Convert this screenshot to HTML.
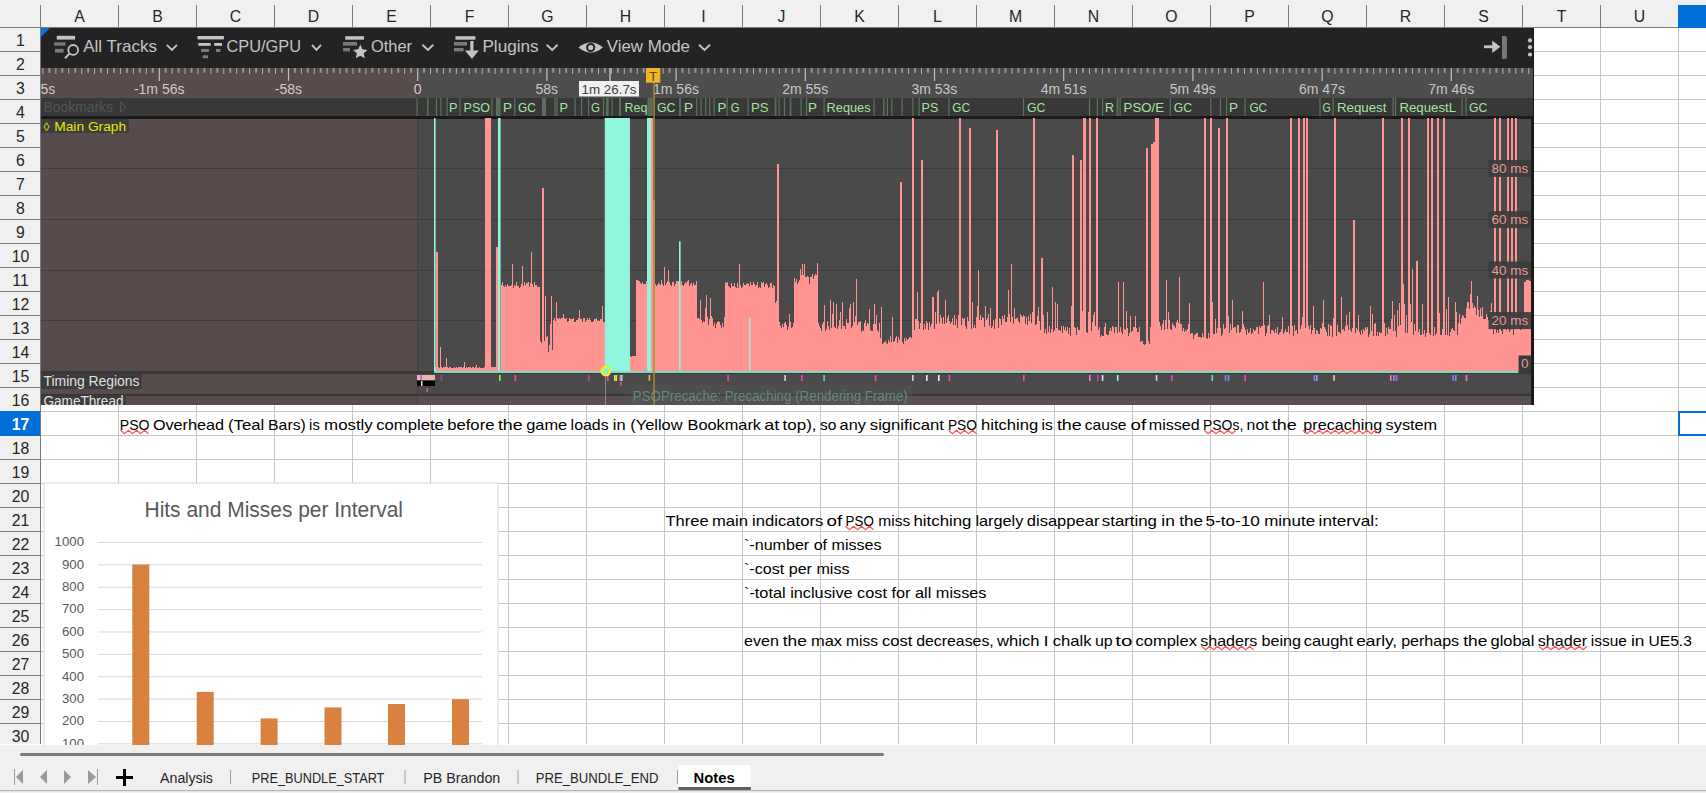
<!DOCTYPE html>
<html><head><meta charset="utf-8"><style>
html,body{margin:0;padding:0;width:1706px;height:793px;overflow:hidden;background:#fff}
svg{display:block;font-family:"Liberation Sans", sans-serif}
</style></head><body>
<svg width="1706" height="793" viewBox="0 0 1706 793" font-family='"Liberation Sans", sans-serif'>
<rect x="0.00" y="0.00" width="1706.00" height="793.00" fill="#ffffff"/>
<rect x="118.00" y="27.00" width="1.00" height="717.00" fill="#c6c6c6"/>
<rect x="196.00" y="27.00" width="1.00" height="717.00" fill="#c6c6c6"/>
<rect x="274.00" y="27.00" width="1.00" height="717.00" fill="#c6c6c6"/>
<rect x="352.00" y="27.00" width="1.00" height="717.00" fill="#c6c6c6"/>
<rect x="430.00" y="27.00" width="1.00" height="717.00" fill="#c6c6c6"/>
<rect x="508.00" y="27.00" width="1.00" height="717.00" fill="#c6c6c6"/>
<rect x="586.00" y="27.00" width="1.00" height="717.00" fill="#c6c6c6"/>
<rect x="664.00" y="27.00" width="1.00" height="717.00" fill="#c6c6c6"/>
<rect x="742.00" y="27.00" width="1.00" height="717.00" fill="#c6c6c6"/>
<rect x="820.00" y="27.00" width="1.00" height="717.00" fill="#c6c6c6"/>
<rect x="898.00" y="27.00" width="1.00" height="717.00" fill="#c6c6c6"/>
<rect x="976.00" y="27.00" width="1.00" height="717.00" fill="#c6c6c6"/>
<rect x="1054.00" y="27.00" width="1.00" height="717.00" fill="#c6c6c6"/>
<rect x="1132.00" y="27.00" width="1.00" height="717.00" fill="#c6c6c6"/>
<rect x="1210.00" y="27.00" width="1.00" height="717.00" fill="#c6c6c6"/>
<rect x="1288.00" y="27.00" width="1.00" height="717.00" fill="#c6c6c6"/>
<rect x="1366.00" y="27.00" width="1.00" height="717.00" fill="#c6c6c6"/>
<rect x="1444.00" y="27.00" width="1.00" height="717.00" fill="#c6c6c6"/>
<rect x="1522.00" y="27.00" width="1.00" height="717.00" fill="#c6c6c6"/>
<rect x="1600.00" y="27.00" width="1.00" height="717.00" fill="#c6c6c6"/>
<rect x="1678.00" y="27.00" width="1.00" height="717.00" fill="#c6c6c6"/>
<rect x="1756.00" y="27.00" width="1.00" height="717.00" fill="#c6c6c6"/>
<rect x="40.00" y="51.00" width="1666.00" height="1.00" fill="#c6c6c6"/>
<rect x="40.00" y="75.00" width="1666.00" height="1.00" fill="#c6c6c6"/>
<rect x="40.00" y="99.00" width="1666.00" height="1.00" fill="#c6c6c6"/>
<rect x="40.00" y="123.00" width="1666.00" height="1.00" fill="#c6c6c6"/>
<rect x="40.00" y="147.00" width="1666.00" height="1.00" fill="#c6c6c6"/>
<rect x="40.00" y="171.00" width="1666.00" height="1.00" fill="#c6c6c6"/>
<rect x="40.00" y="195.00" width="1666.00" height="1.00" fill="#c6c6c6"/>
<rect x="40.00" y="219.00" width="1666.00" height="1.00" fill="#c6c6c6"/>
<rect x="40.00" y="243.00" width="1666.00" height="1.00" fill="#c6c6c6"/>
<rect x="40.00" y="267.00" width="1666.00" height="1.00" fill="#c6c6c6"/>
<rect x="40.00" y="291.00" width="1666.00" height="1.00" fill="#c6c6c6"/>
<rect x="40.00" y="315.00" width="1666.00" height="1.00" fill="#c6c6c6"/>
<rect x="40.00" y="339.00" width="1666.00" height="1.00" fill="#c6c6c6"/>
<rect x="40.00" y="363.00" width="1666.00" height="1.00" fill="#c6c6c6"/>
<rect x="40.00" y="387.00" width="1666.00" height="1.00" fill="#c6c6c6"/>
<rect x="40.00" y="411.00" width="1666.00" height="1.00" fill="#c6c6c6"/>
<rect x="40.00" y="435.00" width="1666.00" height="1.00" fill="#c6c6c6"/>
<rect x="40.00" y="459.00" width="1666.00" height="1.00" fill="#c6c6c6"/>
<rect x="40.00" y="483.00" width="1666.00" height="1.00" fill="#c6c6c6"/>
<rect x="40.00" y="507.00" width="1666.00" height="1.00" fill="#c6c6c6"/>
<rect x="40.00" y="531.00" width="1666.00" height="1.00" fill="#c6c6c6"/>
<rect x="40.00" y="555.00" width="1666.00" height="1.00" fill="#c6c6c6"/>
<rect x="40.00" y="579.00" width="1666.00" height="1.00" fill="#c6c6c6"/>
<rect x="40.00" y="603.00" width="1666.00" height="1.00" fill="#c6c6c6"/>
<rect x="40.00" y="627.00" width="1666.00" height="1.00" fill="#c6c6c6"/>
<rect x="40.00" y="651.00" width="1666.00" height="1.00" fill="#c6c6c6"/>
<rect x="40.00" y="675.00" width="1666.00" height="1.00" fill="#c6c6c6"/>
<rect x="40.00" y="699.00" width="1666.00" height="1.00" fill="#c6c6c6"/>
<rect x="40.00" y="723.00" width="1666.00" height="1.00" fill="#c6c6c6"/>
<rect x="0.00" y="0.00" width="1706.00" height="27.00" fill="#f0f0f0"/>
<rect x="0.00" y="27.00" width="1706.00" height="1.00" fill="#7a7a7a"/>
<rect x="40.00" y="5.00" width="1.00" height="22.00" fill="#7a7a7a"/>
<rect x="118.00" y="5.00" width="1.00" height="22.00" fill="#7a7a7a"/>
<rect x="196.00" y="5.00" width="1.00" height="22.00" fill="#7a7a7a"/>
<rect x="274.00" y="5.00" width="1.00" height="22.00" fill="#7a7a7a"/>
<rect x="352.00" y="5.00" width="1.00" height="22.00" fill="#7a7a7a"/>
<rect x="430.00" y="5.00" width="1.00" height="22.00" fill="#7a7a7a"/>
<rect x="508.00" y="5.00" width="1.00" height="22.00" fill="#7a7a7a"/>
<rect x="586.00" y="5.00" width="1.00" height="22.00" fill="#7a7a7a"/>
<rect x="664.00" y="5.00" width="1.00" height="22.00" fill="#7a7a7a"/>
<rect x="742.00" y="5.00" width="1.00" height="22.00" fill="#7a7a7a"/>
<rect x="820.00" y="5.00" width="1.00" height="22.00" fill="#7a7a7a"/>
<rect x="898.00" y="5.00" width="1.00" height="22.00" fill="#7a7a7a"/>
<rect x="976.00" y="5.00" width="1.00" height="22.00" fill="#7a7a7a"/>
<rect x="1054.00" y="5.00" width="1.00" height="22.00" fill="#7a7a7a"/>
<rect x="1132.00" y="5.00" width="1.00" height="22.00" fill="#7a7a7a"/>
<rect x="1210.00" y="5.00" width="1.00" height="22.00" fill="#7a7a7a"/>
<rect x="1288.00" y="5.00" width="1.00" height="22.00" fill="#7a7a7a"/>
<rect x="1366.00" y="5.00" width="1.00" height="22.00" fill="#7a7a7a"/>
<rect x="1444.00" y="5.00" width="1.00" height="22.00" fill="#7a7a7a"/>
<rect x="1522.00" y="5.00" width="1.00" height="22.00" fill="#7a7a7a"/>
<rect x="1600.00" y="5.00" width="1.00" height="22.00" fill="#7a7a7a"/>
<rect x="1678.00" y="5.00" width="1.00" height="22.00" fill="#7a7a7a"/>
<text x="79.5" y="22.2" font-size="15.8" fill="#262626" text-anchor="middle">A</text>
<text x="157.5" y="22.2" font-size="15.8" fill="#262626" text-anchor="middle">B</text>
<text x="235.5" y="22.2" font-size="15.8" fill="#262626" text-anchor="middle">C</text>
<text x="313.5" y="22.2" font-size="15.8" fill="#262626" text-anchor="middle">D</text>
<text x="391.5" y="22.2" font-size="15.8" fill="#262626" text-anchor="middle">E</text>
<text x="469.5" y="22.2" font-size="15.8" fill="#262626" text-anchor="middle">F</text>
<text x="547.5" y="22.2" font-size="15.8" fill="#262626" text-anchor="middle">G</text>
<text x="625.5" y="22.2" font-size="15.8" fill="#262626" text-anchor="middle">H</text>
<text x="703.5" y="22.2" font-size="15.8" fill="#262626" text-anchor="middle">I</text>
<text x="781.5" y="22.2" font-size="15.8" fill="#262626" text-anchor="middle">J</text>
<text x="859.5" y="22.2" font-size="15.8" fill="#262626" text-anchor="middle">K</text>
<text x="937.5" y="22.2" font-size="15.8" fill="#262626" text-anchor="middle">L</text>
<text x="1015.5" y="22.2" font-size="15.8" fill="#262626" text-anchor="middle">M</text>
<text x="1093.5" y="22.2" font-size="15.8" fill="#262626" text-anchor="middle">N</text>
<text x="1171.5" y="22.2" font-size="15.8" fill="#262626" text-anchor="middle">O</text>
<text x="1249.5" y="22.2" font-size="15.8" fill="#262626" text-anchor="middle">P</text>
<text x="1327.5" y="22.2" font-size="15.8" fill="#262626" text-anchor="middle">Q</text>
<text x="1405.5" y="22.2" font-size="15.8" fill="#262626" text-anchor="middle">R</text>
<text x="1483.5" y="22.2" font-size="15.8" fill="#262626" text-anchor="middle">S</text>
<text x="1561.5" y="22.2" font-size="15.8" fill="#262626" text-anchor="middle">T</text>
<text x="1639.5" y="22.2" font-size="15.8" fill="#262626" text-anchor="middle">U</text>
<rect x="1678.00" y="5.00" width="28.00" height="23.00" fill="#0070d8"/>
<rect x="0.00" y="28.00" width="40.00" height="716.00" fill="#f0f0f0"/>
<rect x="40.00" y="5.00" width="1.00" height="739.00" fill="#7a7a7a"/>
<rect x="0.00" y="51.00" width="40.00" height="1.00" fill="#7a7a7a"/>
<rect x="0.00" y="75.00" width="40.00" height="1.00" fill="#7a7a7a"/>
<rect x="0.00" y="99.00" width="40.00" height="1.00" fill="#7a7a7a"/>
<rect x="0.00" y="123.00" width="40.00" height="1.00" fill="#7a7a7a"/>
<rect x="0.00" y="147.00" width="40.00" height="1.00" fill="#7a7a7a"/>
<rect x="0.00" y="171.00" width="40.00" height="1.00" fill="#7a7a7a"/>
<rect x="0.00" y="195.00" width="40.00" height="1.00" fill="#7a7a7a"/>
<rect x="0.00" y="219.00" width="40.00" height="1.00" fill="#7a7a7a"/>
<rect x="0.00" y="243.00" width="40.00" height="1.00" fill="#7a7a7a"/>
<rect x="0.00" y="267.00" width="40.00" height="1.00" fill="#7a7a7a"/>
<rect x="0.00" y="291.00" width="40.00" height="1.00" fill="#7a7a7a"/>
<rect x="0.00" y="315.00" width="40.00" height="1.00" fill="#7a7a7a"/>
<rect x="0.00" y="339.00" width="40.00" height="1.00" fill="#7a7a7a"/>
<rect x="0.00" y="363.00" width="40.00" height="1.00" fill="#7a7a7a"/>
<rect x="0.00" y="387.00" width="40.00" height="1.00" fill="#7a7a7a"/>
<rect x="0.00" y="411.00" width="40.00" height="1.00" fill="#7a7a7a"/>
<rect x="0.00" y="435.00" width="40.00" height="1.00" fill="#7a7a7a"/>
<rect x="0.00" y="459.00" width="40.00" height="1.00" fill="#7a7a7a"/>
<rect x="0.00" y="483.00" width="40.00" height="1.00" fill="#7a7a7a"/>
<rect x="0.00" y="507.00" width="40.00" height="1.00" fill="#7a7a7a"/>
<rect x="0.00" y="531.00" width="40.00" height="1.00" fill="#7a7a7a"/>
<rect x="0.00" y="555.00" width="40.00" height="1.00" fill="#7a7a7a"/>
<rect x="0.00" y="579.00" width="40.00" height="1.00" fill="#7a7a7a"/>
<rect x="0.00" y="603.00" width="40.00" height="1.00" fill="#7a7a7a"/>
<rect x="0.00" y="627.00" width="40.00" height="1.00" fill="#7a7a7a"/>
<rect x="0.00" y="651.00" width="40.00" height="1.00" fill="#7a7a7a"/>
<rect x="0.00" y="675.00" width="40.00" height="1.00" fill="#7a7a7a"/>
<rect x="0.00" y="699.00" width="40.00" height="1.00" fill="#7a7a7a"/>
<rect x="0.00" y="723.00" width="40.00" height="1.00" fill="#7a7a7a"/>
<rect x="0.00" y="411.00" width="40.00" height="25.00" fill="#0070d8"/>
<text x="20.5" y="46.2" font-size="15.8" fill="#262626" text-anchor="middle">1</text>
<text x="20.5" y="70.2" font-size="15.8" fill="#262626" text-anchor="middle">2</text>
<text x="20.5" y="94.2" font-size="15.8" fill="#262626" text-anchor="middle">3</text>
<text x="20.5" y="118.2" font-size="15.8" fill="#262626" text-anchor="middle">4</text>
<text x="20.5" y="142.2" font-size="15.8" fill="#262626" text-anchor="middle">5</text>
<text x="20.5" y="166.2" font-size="15.8" fill="#262626" text-anchor="middle">6</text>
<text x="20.5" y="190.2" font-size="15.8" fill="#262626" text-anchor="middle">7</text>
<text x="20.5" y="214.2" font-size="15.8" fill="#262626" text-anchor="middle">8</text>
<text x="20.5" y="238.2" font-size="15.8" fill="#262626" text-anchor="middle">9</text>
<text x="20.5" y="262.2" font-size="15.8" fill="#262626" text-anchor="middle">10</text>
<text x="20.5" y="286.2" font-size="15.8" fill="#262626" text-anchor="middle">11</text>
<text x="20.5" y="310.2" font-size="15.8" fill="#262626" text-anchor="middle">12</text>
<text x="20.5" y="334.2" font-size="15.8" fill="#262626" text-anchor="middle">13</text>
<text x="20.5" y="358.2" font-size="15.8" fill="#262626" text-anchor="middle">14</text>
<text x="20.5" y="382.2" font-size="15.8" fill="#262626" text-anchor="middle">15</text>
<text x="20.5" y="406.2" font-size="15.8" fill="#262626" text-anchor="middle">16</text>
<text x="20.5" y="430.2" font-size="15.8" fill="#ffffff" text-anchor="middle" font-weight="bold">17</text>
<text x="20.5" y="454.2" font-size="15.8" fill="#262626" text-anchor="middle">18</text>
<text x="20.5" y="478.2" font-size="15.8" fill="#262626" text-anchor="middle">19</text>
<text x="20.5" y="502.2" font-size="15.8" fill="#262626" text-anchor="middle">20</text>
<text x="20.5" y="526.2" font-size="15.8" fill="#262626" text-anchor="middle">21</text>
<text x="20.5" y="550.2" font-size="15.8" fill="#262626" text-anchor="middle">22</text>
<text x="20.5" y="574.2" font-size="15.8" fill="#262626" text-anchor="middle">23</text>
<text x="20.5" y="598.2" font-size="15.8" fill="#262626" text-anchor="middle">24</text>
<text x="20.5" y="622.2" font-size="15.8" fill="#262626" text-anchor="middle">25</text>
<text x="20.5" y="646.2" font-size="15.8" fill="#262626" text-anchor="middle">26</text>
<text x="20.5" y="670.2" font-size="15.8" fill="#262626" text-anchor="middle">27</text>
<text x="20.5" y="694.2" font-size="15.8" fill="#262626" text-anchor="middle">28</text>
<text x="20.5" y="718.2" font-size="15.8" fill="#262626" text-anchor="middle">29</text>
<text x="20.5" y="742.2" font-size="15.8" fill="#262626" text-anchor="middle">30</text>
<rect x="1679" y="412" width="40" height="23" fill="none" stroke="#0070d8" stroke-width="2"/>
<text x="119.8" y="429.5" font-size="14.5" fill="#000000" textLength="29.8" lengthAdjust="spacingAndGlyphs">PSO</text>
<text x="152.9" y="429.5" font-size="14.5" fill="#000000" textLength="71.2" lengthAdjust="spacingAndGlyphs">Overhead</text>
<text x="228.0" y="429.5" font-size="14.5" fill="#000000" textLength="36.2" lengthAdjust="spacingAndGlyphs">(Teal</text>
<text x="268.1" y="429.5" font-size="14.5" fill="#000000" textLength="37.7" lengthAdjust="spacingAndGlyphs">Bars)</text>
<text x="309.1" y="429.5" font-size="14.5" fill="#000000" textLength="10.7" lengthAdjust="spacingAndGlyphs">is</text>
<text x="324.1" y="429.5" font-size="14.5" fill="#000000" textLength="48.7" lengthAdjust="spacingAndGlyphs">mostly</text>
<text x="376.2" y="429.5" font-size="14.5" fill="#000000" textLength="67.7" lengthAdjust="spacingAndGlyphs">complete</text>
<text x="447.2" y="429.5" font-size="14.5" fill="#000000" textLength="47.3" lengthAdjust="spacingAndGlyphs">before</text>
<text x="497.9" y="429.5" font-size="14.5" fill="#000000" textLength="24.8" lengthAdjust="spacingAndGlyphs">the</text>
<text x="526.2" y="429.5" font-size="14.5" fill="#000000" textLength="41.0" lengthAdjust="spacingAndGlyphs">game</text>
<text x="570.6" y="429.5" font-size="14.5" fill="#000000" textLength="38.1" lengthAdjust="spacingAndGlyphs">loads</text>
<text x="612.8" y="429.5" font-size="14.5" fill="#000000" textLength="12.8" lengthAdjust="spacingAndGlyphs">in</text>
<text x="630.3" y="429.5" font-size="14.5" fill="#000000" textLength="52.3" lengthAdjust="spacingAndGlyphs">(Yellow</text>
<text x="687.5" y="429.5" font-size="14.5" fill="#000000" textLength="73.5" lengthAdjust="spacingAndGlyphs">Bookmark</text>
<text x="764.3" y="429.5" font-size="14.5" fill="#000000" textLength="15.0" lengthAdjust="spacingAndGlyphs">at</text>
<text x="782.6" y="429.5" font-size="14.5" fill="#000000" textLength="34.0" lengthAdjust="spacingAndGlyphs">top),</text>
<text x="819.9" y="429.5" font-size="14.5" fill="#000000" textLength="16.4" lengthAdjust="spacingAndGlyphs">so</text>
<text x="839.6" y="429.5" font-size="14.5" fill="#000000" textLength="26.2" lengthAdjust="spacingAndGlyphs">any</text>
<text x="869.8" y="429.5" font-size="14.5" fill="#000000" textLength="74.1" lengthAdjust="spacingAndGlyphs">significant</text>
<text x="947.9" y="429.5" font-size="14.5" fill="#000000" textLength="29.0" lengthAdjust="spacingAndGlyphs">PSO</text>
<text x="981.0" y="429.5" font-size="14.5" fill="#000000" textLength="57.1" lengthAdjust="spacingAndGlyphs">hitching</text>
<text x="1041.5" y="429.5" font-size="14.5" fill="#000000" textLength="11.4" lengthAdjust="spacingAndGlyphs">is</text>
<text x="1056.9" y="429.5" font-size="14.5" fill="#000000" textLength="24.9" lengthAdjust="spacingAndGlyphs">the</text>
<text x="1084.8" y="429.5" font-size="14.5" fill="#000000" textLength="41.7" lengthAdjust="spacingAndGlyphs">cause</text>
<text x="1130.6" y="429.5" font-size="14.5" fill="#000000" textLength="15.6" lengthAdjust="spacingAndGlyphs">of</text>
<text x="1148.8" y="429.5" font-size="14.5" fill="#000000" textLength="50.9" lengthAdjust="spacingAndGlyphs">missed</text>
<text x="1203.0" y="429.5" font-size="14.5" fill="#000000" textLength="40.3" lengthAdjust="spacingAndGlyphs">PSOs,</text>
<text x="1246.6" y="429.5" font-size="14.5" fill="#000000" textLength="22.0" lengthAdjust="spacingAndGlyphs">not</text>
<text x="1271.9" y="429.5" font-size="14.5" fill="#000000" textLength="24.9" lengthAdjust="spacingAndGlyphs">the</text>
<text x="1303.3" y="429.5" font-size="14.5" fill="#000000" textLength="79.0" lengthAdjust="spacingAndGlyphs">precaching</text>
<text x="1385.6" y="429.5" font-size="14.5" fill="#000000" textLength="51.6" lengthAdjust="spacingAndGlyphs">system</text>
<text x="665.5" y="525.5" font-size="14.5" fill="#000000" textLength="43.1" lengthAdjust="spacingAndGlyphs">Three</text>
<text x="712.0" y="525.5" font-size="14.5" fill="#000000" textLength="36.0" lengthAdjust="spacingAndGlyphs">main</text>
<text x="752.1" y="525.5" font-size="14.5" fill="#000000" textLength="71.2" lengthAdjust="spacingAndGlyphs">indicators</text>
<text x="826.6" y="525.5" font-size="14.5" fill="#000000" textLength="15.7" lengthAdjust="spacingAndGlyphs">of</text>
<text x="845.6" y="525.5" font-size="14.5" fill="#000000" textLength="28.3" lengthAdjust="spacingAndGlyphs">PSO</text>
<text x="878.3" y="525.5" font-size="14.5" fill="#000000" textLength="31.9" lengthAdjust="spacingAndGlyphs">miss</text>
<text x="913.5" y="525.5" font-size="14.5" fill="#000000" textLength="57.9" lengthAdjust="spacingAndGlyphs">hitching</text>
<text x="975.4" y="525.5" font-size="14.5" fill="#000000" textLength="48.0" lengthAdjust="spacingAndGlyphs">largely</text>
<text x="1026.8" y="525.5" font-size="14.5" fill="#000000" textLength="72.6" lengthAdjust="spacingAndGlyphs">disappear</text>
<text x="1101.8" y="525.5" font-size="14.5" fill="#000000" textLength="55.2" lengthAdjust="spacingAndGlyphs">starting</text>
<text x="1161.3" y="525.5" font-size="14.5" fill="#000000" textLength="13.5" lengthAdjust="spacingAndGlyphs">in</text>
<text x="1179.2" y="525.5" font-size="14.5" fill="#000000" textLength="23.7" lengthAdjust="spacingAndGlyphs">the</text>
<text x="1205.5" y="525.5" font-size="14.5" fill="#000000" textLength="54.3" lengthAdjust="spacingAndGlyphs">5-to-10</text>
<text x="1264.2" y="525.5" font-size="14.5" fill="#000000" textLength="50.9" lengthAdjust="spacingAndGlyphs">minute</text>
<text x="1318.6" y="525.5" font-size="14.5" fill="#000000" textLength="60.2" lengthAdjust="spacingAndGlyphs">interval:</text>
<text x="744.1" y="645.5" font-size="14.5" fill="#000000" textLength="34.7" lengthAdjust="spacingAndGlyphs">even</text>
<text x="782.8" y="645.5" font-size="14.5" fill="#000000" textLength="24.1" lengthAdjust="spacingAndGlyphs">the</text>
<text x="811.0" y="645.5" font-size="14.5" fill="#000000" textLength="31.1" lengthAdjust="spacingAndGlyphs">max</text>
<text x="846.1" y="645.5" font-size="14.5" fill="#000000" textLength="31.9" lengthAdjust="spacingAndGlyphs">miss</text>
<text x="882.0" y="645.5" font-size="14.5" fill="#000000" textLength="30.4" lengthAdjust="spacingAndGlyphs">cost</text>
<text x="916.2" y="645.5" font-size="14.5" fill="#000000" textLength="77.6" lengthAdjust="spacingAndGlyphs">decreases,</text>
<text x="997.1" y="645.5" font-size="14.5" fill="#000000" textLength="42.4" lengthAdjust="spacingAndGlyphs">which</text>
<text x="1043.6" y="645.5" font-size="14.5" fill="#000000" textLength="5.1" lengthAdjust="spacingAndGlyphs">I</text>
<text x="1052.7" y="645.5" font-size="14.5" fill="#000000" textLength="38.9" lengthAdjust="spacingAndGlyphs">chalk</text>
<text x="1094.9" y="645.5" font-size="14.5" fill="#000000" textLength="17.8" lengthAdjust="spacingAndGlyphs">up</text>
<text x="1115.3" y="645.5" font-size="14.5" fill="#000000" textLength="17.1" lengthAdjust="spacingAndGlyphs">to</text>
<text x="1135.5" y="645.5" font-size="14.5" fill="#000000" textLength="61.4" lengthAdjust="spacingAndGlyphs">complex</text>
<text x="1200.2" y="645.5" font-size="14.5" fill="#000000" textLength="57.2" lengthAdjust="spacingAndGlyphs">shaders</text>
<text x="1261.4" y="645.5" font-size="14.5" fill="#000000" textLength="39.6" lengthAdjust="spacingAndGlyphs">being</text>
<text x="1303.7" y="645.5" font-size="14.5" fill="#000000" textLength="49.4" lengthAdjust="spacingAndGlyphs">caught</text>
<text x="1356.2" y="645.5" font-size="14.5" fill="#000000" textLength="41.0" lengthAdjust="spacingAndGlyphs">early,</text>
<text x="1401.2" y="645.5" font-size="14.5" fill="#000000" textLength="57.9" lengthAdjust="spacingAndGlyphs">perhaps</text>
<text x="1463.2" y="645.5" font-size="14.5" fill="#000000" textLength="24.1" lengthAdjust="spacingAndGlyphs">the</text>
<text x="1490.6" y="645.5" font-size="14.5" fill="#000000" textLength="43.8" lengthAdjust="spacingAndGlyphs">global</text>
<text x="1537.7" y="645.5" font-size="14.5" fill="#000000" textLength="49.4" lengthAdjust="spacingAndGlyphs">shader</text>
<text x="1590.8" y="645.5" font-size="14.5" fill="#000000" textLength="36.0" lengthAdjust="spacingAndGlyphs">issue</text>
<text x="1630.9" y="645.5" font-size="14.5" fill="#000000" textLength="13.5" lengthAdjust="spacingAndGlyphs">in</text>
<text x="1648.5" y="645.5" font-size="14.5" fill="#000000" textLength="43.4" lengthAdjust="spacingAndGlyphs">UE5.3</text>
<text x="744.0" y="549.5" font-size="14.5" fill="#000000" textLength="137.5" lengthAdjust="spacingAndGlyphs">`-number of misses</text>
<text x="744.0" y="573.5" font-size="14.5" fill="#000000" textLength="105.5" lengthAdjust="spacingAndGlyphs">`-cost per miss</text>
<text x="744.0" y="597.5" font-size="14.5" fill="#000000" textLength="242.5" lengthAdjust="spacingAndGlyphs">`-total inclusive cost for all misses</text>
<polyline points="120.5,430.3 124.5,433.7 128.5,430.3 132.5,433.7 136.5,430.3 140.5,433.7 144.5,430.3 148.5,433.7" fill="none" stroke="#ff5050" stroke-width="1.2"/>
<polyline points="948.5,430.3 952.5,433.7 956.5,430.3 960.5,433.7 964.5,430.3 968.5,433.7 972.5,430.3 976.5,433.7" fill="none" stroke="#ff5050" stroke-width="1.2"/>
<polyline points="1204.0,430.3 1208.0,433.7 1212.0,430.3 1216.0,433.7 1220.0,430.3 1224.0,433.7 1228.0,430.3 1232.0,433.7 1236.0,430.3" fill="none" stroke="#ff5050" stroke-width="1.2"/>
<polyline points="1303.0,430.3 1307.0,433.7 1311.0,430.3 1315.0,433.7 1319.0,430.3 1323.0,433.7 1327.0,430.3 1331.0,433.7 1335.0,430.3 1339.0,433.7 1343.0,430.3 1347.0,433.7 1351.0,430.3 1355.0,433.7 1359.0,430.3 1363.0,433.7 1367.0,430.3 1371.0,433.7 1375.0,430.3 1379.0,433.7" fill="none" stroke="#ff5050" stroke-width="1.2"/>
<polyline points="845.5,526.3 849.5,529.7 853.5,526.3 857.5,529.7 861.5,526.3 865.5,529.7 869.5,526.3 873.5,529.7" fill="none" stroke="#ff5050" stroke-width="1.2"/>
<polyline points="1201.6,646.3 1205.6,649.7 1209.6,646.3 1213.6,649.7 1217.6,646.3 1221.6,649.7 1225.6,646.3 1229.6,649.7 1233.6,646.3 1237.6,649.7 1241.6,646.3 1245.6,649.7 1249.6,646.3 1253.6,649.7" fill="none" stroke="#ff5050" stroke-width="1.2"/>
<polyline points="1539.0,646.3 1543.0,649.7 1547.0,646.3 1551.0,649.7 1555.0,646.3 1559.0,649.7 1563.0,646.3 1567.0,649.7 1571.0,646.3 1575.0,649.7 1579.0,646.3 1583.0,649.7 1587.0,646.3" fill="none" stroke="#ff5050" stroke-width="1.2"/>
<rect x="44.00" y="483.00" width="454.00" height="300.00" fill="#ffffff" stroke="#d9d9d9" stroke-width="1"/>
<text x="144.5" y="516.6" font-size="21.5" fill="#595959" textLength="258.5" lengthAdjust="spacingAndGlyphs">Hits and Misses per Interval</text>
<rect x="98.00" y="542.00" width="384.00" height="1.00" fill="#d9d9d9"/>
<text x="84.0" y="546.3" font-size="12.5" fill="#595959" text-anchor="end" textLength="29.4" lengthAdjust="spacingAndGlyphs">1000</text>
<rect x="98.00" y="564.37" width="384.00" height="1.00" fill="#d9d9d9"/>
<text x="84.0" y="568.7" font-size="12.5" fill="#595959" text-anchor="end" textLength="22.0" lengthAdjust="spacingAndGlyphs">900</text>
<rect x="98.00" y="586.74" width="384.00" height="1.00" fill="#d9d9d9"/>
<text x="84.0" y="591.0" font-size="12.5" fill="#595959" text-anchor="end" textLength="22.0" lengthAdjust="spacingAndGlyphs">800</text>
<rect x="98.00" y="609.11" width="384.00" height="1.00" fill="#d9d9d9"/>
<text x="84.0" y="613.4" font-size="12.5" fill="#595959" text-anchor="end" textLength="22.0" lengthAdjust="spacingAndGlyphs">700</text>
<rect x="98.00" y="631.48" width="384.00" height="1.00" fill="#d9d9d9"/>
<text x="84.0" y="635.8" font-size="12.5" fill="#595959" text-anchor="end" textLength="22.0" lengthAdjust="spacingAndGlyphs">600</text>
<rect x="98.00" y="653.85" width="384.00" height="1.00" fill="#d9d9d9"/>
<text x="84.0" y="658.1" font-size="12.5" fill="#595959" text-anchor="end" textLength="22.0" lengthAdjust="spacingAndGlyphs">500</text>
<rect x="98.00" y="676.22" width="384.00" height="1.00" fill="#d9d9d9"/>
<text x="84.0" y="680.5" font-size="12.5" fill="#595959" text-anchor="end" textLength="22.0" lengthAdjust="spacingAndGlyphs">400</text>
<rect x="98.00" y="698.59" width="384.00" height="1.00" fill="#d9d9d9"/>
<text x="84.0" y="702.9" font-size="12.5" fill="#595959" text-anchor="end" textLength="22.0" lengthAdjust="spacingAndGlyphs">300</text>
<rect x="98.00" y="720.96" width="384.00" height="1.00" fill="#d9d9d9"/>
<text x="84.0" y="725.3" font-size="12.5" fill="#595959" text-anchor="end" textLength="22.0" lengthAdjust="spacingAndGlyphs">200</text>
<rect x="98.00" y="743.33" width="384.00" height="1.00" fill="#d9d9d9"/>
<text x="84.0" y="747.6" font-size="12.5" fill="#595959" text-anchor="end" textLength="22.0" lengthAdjust="spacingAndGlyphs">100</text>
<rect x="132.30" y="564.50" width="17.00" height="235.50" fill="#d9813f"/>
<rect x="196.70" y="691.90" width="17.00" height="108.10" fill="#d9813f"/>
<rect x="260.60" y="718.40" width="17.00" height="81.60" fill="#d9813f"/>
<rect x="324.50" y="707.40" width="17.00" height="92.60" fill="#d9813f"/>
<rect x="388.00" y="704.00" width="17.00" height="96.00" fill="#d9813f"/>
<rect x="452.00" y="699.20" width="17.00" height="100.80" fill="#d9813f"/>
<rect x="0.00" y="745.00" width="1706.00" height="48.00" fill="#f0f0f0"/>
<rect x="20.00" y="753.00" width="864.00" height="3.00" fill="#7a7a7a" rx="1.5"/>
<rect x="0.00" y="790.00" width="1706.00" height="1.20" fill="#b4b4b4"/>
<rect x="14.00" y="769.00" width="1.00" height="16.00" fill="#9a9a9a"/>
<polygon points="16,777 23,770 23,784" fill="#9a9a9a"/>
<polygon points="40,777 47,770 47,784" fill="#9a9a9a"/>
<polygon points="64,770 71,777 64,784" fill="#9a9a9a"/>
<polygon points="88,770 96,777 88,784" fill="#9a9a9a"/>
<rect x="97.00" y="769.00" width="1.00" height="16.00" fill="#9a9a9a"/>
<rect x="116.00" y="776.00" width="17.00" height="3.00" fill="#000"/>
<rect x="123.00" y="769.00" width="3.00" height="17.00" fill="#000"/>
<text x="160.0" y="783.0" font-size="14" fill="#262626" textLength="53.0" lengthAdjust="spacingAndGlyphs">Analysis</text>
<rect x="230.00" y="770.00" width="1.00" height="14.00" fill="#a0a0a0"/>
<text x="251.7" y="783.0" font-size="14" fill="#262626" textLength="132.7" lengthAdjust="spacingAndGlyphs">PRE_BUNDLE_START</text>
<rect x="404.50" y="770.00" width="1.00" height="14.00" fill="#a0a0a0"/>
<text x="423.3" y="783.0" font-size="14" fill="#262626" textLength="77.0" lengthAdjust="spacingAndGlyphs">PB Brandon</text>
<rect x="517.50" y="770.00" width="1.00" height="14.00" fill="#a0a0a0"/>
<text x="535.8" y="783.0" font-size="14" fill="#262626" textLength="122.6" lengthAdjust="spacingAndGlyphs">PRE_BUNDLE_END</text>
<rect x="677.00" y="770.00" width="1.00" height="14.00" fill="#a0a0a0"/>
<rect x="678.40" y="765.00" width="72.40" height="22.00" fill="#ffffff"/>
<rect x="678.40" y="787.00" width="72.40" height="3.00" fill="#606060"/>
<text x="693.6" y="783.0" font-size="14" fill="#000" textLength="41.0" lengthAdjust="spacingAndGlyphs" font-weight="bold">Notes</text>
<svg x="41" y="28" width="1493" height="377" viewBox="41 28 1493 377" overflow="hidden">
<rect x="41.00" y="28.00" width="1493.00" height="377.00" fill="#1c1c1c"/>
<rect x="41.00" y="28.00" width="1493.00" height="40.00" fill="#232323"/>
<rect x="417.60" y="68.00" width="1115.40" height="30.00" fill="#4d4d4d"/>
<rect x="41.00" y="68.00" width="376.60" height="30.00" fill="#574b4b"/>
<rect x="42.42" y="68.00" width="1.00" height="6.00" fill="#b0b0b0"/>
<rect x="48.38" y="68.00" width="2.00" height="4.80" fill="#959595"/>
<rect x="55.34" y="68.00" width="1.00" height="6.00" fill="#b0b0b0"/>
<rect x="61.30" y="68.00" width="2.00" height="4.80" fill="#959595"/>
<rect x="68.26" y="68.00" width="1.00" height="6.00" fill="#b0b0b0"/>
<rect x="74.22" y="68.00" width="2.00" height="4.80" fill="#959595"/>
<rect x="81.18" y="68.00" width="1.00" height="6.00" fill="#b0b0b0"/>
<rect x="87.14" y="68.00" width="2.00" height="4.80" fill="#959595"/>
<rect x="94.10" y="68.00" width="1.00" height="6.00" fill="#b0b0b0"/>
<rect x="100.06" y="68.00" width="2.00" height="4.80" fill="#959595"/>
<rect x="107.02" y="68.00" width="1.00" height="6.00" fill="#b0b0b0"/>
<rect x="112.98" y="68.00" width="2.00" height="4.80" fill="#959595"/>
<rect x="119.94" y="68.00" width="1.00" height="6.00" fill="#b0b0b0"/>
<rect x="125.90" y="68.00" width="2.00" height="4.80" fill="#959595"/>
<rect x="132.86" y="68.00" width="1.00" height="6.00" fill="#b0b0b0"/>
<rect x="138.82" y="68.00" width="2.00" height="4.80" fill="#959595"/>
<rect x="145.78" y="68.00" width="1.00" height="6.00" fill="#b0b0b0"/>
<rect x="151.74" y="68.00" width="2.00" height="4.80" fill="#959595"/>
<rect x="158.70" y="68.00" width="1.20" height="13.00" fill="#c0c0c0"/>
<rect x="164.66" y="68.00" width="2.00" height="4.80" fill="#959595"/>
<rect x="171.62" y="68.00" width="1.00" height="6.00" fill="#b0b0b0"/>
<rect x="177.58" y="68.00" width="2.00" height="4.80" fill="#959595"/>
<rect x="184.54" y="68.00" width="1.00" height="6.00" fill="#b0b0b0"/>
<rect x="190.50" y="68.00" width="2.00" height="4.80" fill="#959595"/>
<rect x="197.46" y="68.00" width="1.00" height="6.00" fill="#b0b0b0"/>
<rect x="203.42" y="68.00" width="2.00" height="4.80" fill="#959595"/>
<rect x="210.38" y="68.00" width="1.00" height="6.00" fill="#b0b0b0"/>
<rect x="216.34" y="68.00" width="2.00" height="4.80" fill="#959595"/>
<rect x="223.30" y="68.00" width="1.00" height="6.00" fill="#b0b0b0"/>
<rect x="229.26" y="68.00" width="2.00" height="4.80" fill="#959595"/>
<rect x="236.22" y="68.00" width="1.00" height="6.00" fill="#b0b0b0"/>
<rect x="242.18" y="68.00" width="2.00" height="4.80" fill="#959595"/>
<rect x="249.14" y="68.00" width="1.00" height="6.00" fill="#b0b0b0"/>
<rect x="255.10" y="68.00" width="2.00" height="4.80" fill="#959595"/>
<rect x="262.06" y="68.00" width="1.00" height="6.00" fill="#b0b0b0"/>
<rect x="268.02" y="68.00" width="2.00" height="4.80" fill="#959595"/>
<rect x="274.98" y="68.00" width="1.00" height="6.00" fill="#b0b0b0"/>
<rect x="280.94" y="68.00" width="2.00" height="4.80" fill="#959595"/>
<rect x="287.90" y="68.00" width="1.20" height="13.00" fill="#c0c0c0"/>
<rect x="293.86" y="68.00" width="2.00" height="4.80" fill="#959595"/>
<rect x="300.82" y="68.00" width="1.00" height="6.00" fill="#b0b0b0"/>
<rect x="306.78" y="68.00" width="2.00" height="4.80" fill="#959595"/>
<rect x="313.74" y="68.00" width="1.00" height="6.00" fill="#b0b0b0"/>
<rect x="319.70" y="68.00" width="2.00" height="4.80" fill="#959595"/>
<rect x="326.66" y="68.00" width="1.00" height="6.00" fill="#b0b0b0"/>
<rect x="332.62" y="68.00" width="2.00" height="4.80" fill="#959595"/>
<rect x="339.58" y="68.00" width="1.00" height="6.00" fill="#b0b0b0"/>
<rect x="345.54" y="68.00" width="2.00" height="4.80" fill="#959595"/>
<rect x="352.50" y="68.00" width="1.00" height="6.00" fill="#b0b0b0"/>
<rect x="358.46" y="68.00" width="2.00" height="4.80" fill="#959595"/>
<rect x="365.42" y="68.00" width="1.00" height="6.00" fill="#b0b0b0"/>
<rect x="371.38" y="68.00" width="2.00" height="4.80" fill="#959595"/>
<rect x="378.34" y="68.00" width="1.00" height="6.00" fill="#b0b0b0"/>
<rect x="384.30" y="68.00" width="2.00" height="4.80" fill="#959595"/>
<rect x="391.26" y="68.00" width="1.00" height="6.00" fill="#b0b0b0"/>
<rect x="397.22" y="68.00" width="2.00" height="4.80" fill="#959595"/>
<rect x="404.18" y="68.00" width="1.00" height="6.00" fill="#b0b0b0"/>
<rect x="410.14" y="68.00" width="2.00" height="4.80" fill="#959595"/>
<rect x="417.10" y="68.00" width="1.20" height="13.00" fill="#c0c0c0"/>
<rect x="423.06" y="68.00" width="2.00" height="4.80" fill="#959595"/>
<rect x="430.02" y="68.00" width="1.00" height="6.00" fill="#b0b0b0"/>
<rect x="435.98" y="68.00" width="2.00" height="4.80" fill="#959595"/>
<rect x="442.94" y="68.00" width="1.00" height="6.00" fill="#b0b0b0"/>
<rect x="448.90" y="68.00" width="2.00" height="4.80" fill="#959595"/>
<rect x="455.86" y="68.00" width="1.00" height="6.00" fill="#b0b0b0"/>
<rect x="461.82" y="68.00" width="2.00" height="4.80" fill="#959595"/>
<rect x="468.78" y="68.00" width="1.00" height="6.00" fill="#b0b0b0"/>
<rect x="474.74" y="68.00" width="2.00" height="4.80" fill="#959595"/>
<rect x="481.70" y="68.00" width="1.00" height="6.00" fill="#b0b0b0"/>
<rect x="487.66" y="68.00" width="2.00" height="4.80" fill="#959595"/>
<rect x="494.62" y="68.00" width="1.00" height="6.00" fill="#b0b0b0"/>
<rect x="500.58" y="68.00" width="2.00" height="4.80" fill="#959595"/>
<rect x="507.54" y="68.00" width="1.00" height="6.00" fill="#b0b0b0"/>
<rect x="513.50" y="68.00" width="2.00" height="4.80" fill="#959595"/>
<rect x="520.46" y="68.00" width="1.00" height="6.00" fill="#b0b0b0"/>
<rect x="526.42" y="68.00" width="2.00" height="4.80" fill="#959595"/>
<rect x="533.38" y="68.00" width="1.00" height="6.00" fill="#b0b0b0"/>
<rect x="539.34" y="68.00" width="2.00" height="4.80" fill="#959595"/>
<rect x="546.30" y="68.00" width="1.20" height="13.00" fill="#c0c0c0"/>
<rect x="552.26" y="68.00" width="2.00" height="4.80" fill="#959595"/>
<rect x="559.22" y="68.00" width="1.00" height="6.00" fill="#b0b0b0"/>
<rect x="565.18" y="68.00" width="2.00" height="4.80" fill="#959595"/>
<rect x="572.14" y="68.00" width="1.00" height="6.00" fill="#b0b0b0"/>
<rect x="578.10" y="68.00" width="2.00" height="4.80" fill="#959595"/>
<rect x="585.06" y="68.00" width="1.00" height="6.00" fill="#b0b0b0"/>
<rect x="591.02" y="68.00" width="2.00" height="4.80" fill="#959595"/>
<rect x="597.98" y="68.00" width="1.00" height="6.00" fill="#b0b0b0"/>
<rect x="603.94" y="68.00" width="2.00" height="4.80" fill="#959595"/>
<rect x="610.90" y="68.00" width="1.00" height="6.00" fill="#b0b0b0"/>
<rect x="616.86" y="68.00" width="2.00" height="4.80" fill="#959595"/>
<rect x="623.82" y="68.00" width="1.00" height="6.00" fill="#b0b0b0"/>
<rect x="629.78" y="68.00" width="2.00" height="4.80" fill="#959595"/>
<rect x="636.74" y="68.00" width="1.00" height="6.00" fill="#b0b0b0"/>
<rect x="642.70" y="68.00" width="2.00" height="4.80" fill="#959595"/>
<rect x="649.66" y="68.00" width="1.00" height="6.00" fill="#b0b0b0"/>
<rect x="655.62" y="68.00" width="2.00" height="4.80" fill="#959595"/>
<rect x="662.58" y="68.00" width="1.00" height="6.00" fill="#b0b0b0"/>
<rect x="668.54" y="68.00" width="2.00" height="4.80" fill="#959595"/>
<rect x="675.50" y="68.00" width="1.20" height="13.00" fill="#c0c0c0"/>
<rect x="681.46" y="68.00" width="2.00" height="4.80" fill="#959595"/>
<rect x="688.42" y="68.00" width="1.00" height="6.00" fill="#b0b0b0"/>
<rect x="694.38" y="68.00" width="2.00" height="4.80" fill="#959595"/>
<rect x="701.34" y="68.00" width="1.00" height="6.00" fill="#b0b0b0"/>
<rect x="707.30" y="68.00" width="2.00" height="4.80" fill="#959595"/>
<rect x="714.26" y="68.00" width="1.00" height="6.00" fill="#b0b0b0"/>
<rect x="720.22" y="68.00" width="2.00" height="4.80" fill="#959595"/>
<rect x="727.18" y="68.00" width="1.00" height="6.00" fill="#b0b0b0"/>
<rect x="733.14" y="68.00" width="2.00" height="4.80" fill="#959595"/>
<rect x="740.10" y="68.00" width="1.00" height="6.00" fill="#b0b0b0"/>
<rect x="746.06" y="68.00" width="2.00" height="4.80" fill="#959595"/>
<rect x="753.02" y="68.00" width="1.00" height="6.00" fill="#b0b0b0"/>
<rect x="758.98" y="68.00" width="2.00" height="4.80" fill="#959595"/>
<rect x="765.94" y="68.00" width="1.00" height="6.00" fill="#b0b0b0"/>
<rect x="771.90" y="68.00" width="2.00" height="4.80" fill="#959595"/>
<rect x="778.86" y="68.00" width="1.00" height="6.00" fill="#b0b0b0"/>
<rect x="784.82" y="68.00" width="2.00" height="4.80" fill="#959595"/>
<rect x="791.78" y="68.00" width="1.00" height="6.00" fill="#b0b0b0"/>
<rect x="797.74" y="68.00" width="2.00" height="4.80" fill="#959595"/>
<rect x="804.70" y="68.00" width="1.20" height="13.00" fill="#c0c0c0"/>
<rect x="810.66" y="68.00" width="2.00" height="4.80" fill="#959595"/>
<rect x="817.62" y="68.00" width="1.00" height="6.00" fill="#b0b0b0"/>
<rect x="823.58" y="68.00" width="2.00" height="4.80" fill="#959595"/>
<rect x="830.54" y="68.00" width="1.00" height="6.00" fill="#b0b0b0"/>
<rect x="836.50" y="68.00" width="2.00" height="4.80" fill="#959595"/>
<rect x="843.46" y="68.00" width="1.00" height="6.00" fill="#b0b0b0"/>
<rect x="849.42" y="68.00" width="2.00" height="4.80" fill="#959595"/>
<rect x="856.38" y="68.00" width="1.00" height="6.00" fill="#b0b0b0"/>
<rect x="862.34" y="68.00" width="2.00" height="4.80" fill="#959595"/>
<rect x="869.30" y="68.00" width="1.00" height="6.00" fill="#b0b0b0"/>
<rect x="875.26" y="68.00" width="2.00" height="4.80" fill="#959595"/>
<rect x="882.22" y="68.00" width="1.00" height="6.00" fill="#b0b0b0"/>
<rect x="888.18" y="68.00" width="2.00" height="4.80" fill="#959595"/>
<rect x="895.14" y="68.00" width="1.00" height="6.00" fill="#b0b0b0"/>
<rect x="901.10" y="68.00" width="2.00" height="4.80" fill="#959595"/>
<rect x="908.06" y="68.00" width="1.00" height="6.00" fill="#b0b0b0"/>
<rect x="914.02" y="68.00" width="2.00" height="4.80" fill="#959595"/>
<rect x="920.98" y="68.00" width="1.00" height="6.00" fill="#b0b0b0"/>
<rect x="926.94" y="68.00" width="2.00" height="4.80" fill="#959595"/>
<rect x="933.90" y="68.00" width="1.20" height="13.00" fill="#c0c0c0"/>
<rect x="939.86" y="68.00" width="2.00" height="4.80" fill="#959595"/>
<rect x="946.82" y="68.00" width="1.00" height="6.00" fill="#b0b0b0"/>
<rect x="952.78" y="68.00" width="2.00" height="4.80" fill="#959595"/>
<rect x="959.74" y="68.00" width="1.00" height="6.00" fill="#b0b0b0"/>
<rect x="965.70" y="68.00" width="2.00" height="4.80" fill="#959595"/>
<rect x="972.66" y="68.00" width="1.00" height="6.00" fill="#b0b0b0"/>
<rect x="978.62" y="68.00" width="2.00" height="4.80" fill="#959595"/>
<rect x="985.58" y="68.00" width="1.00" height="6.00" fill="#b0b0b0"/>
<rect x="991.54" y="68.00" width="2.00" height="4.80" fill="#959595"/>
<rect x="998.50" y="68.00" width="1.00" height="6.00" fill="#b0b0b0"/>
<rect x="1004.46" y="68.00" width="2.00" height="4.80" fill="#959595"/>
<rect x="1011.42" y="68.00" width="1.00" height="6.00" fill="#b0b0b0"/>
<rect x="1017.38" y="68.00" width="2.00" height="4.80" fill="#959595"/>
<rect x="1024.34" y="68.00" width="1.00" height="6.00" fill="#b0b0b0"/>
<rect x="1030.30" y="68.00" width="2.00" height="4.80" fill="#959595"/>
<rect x="1037.26" y="68.00" width="1.00" height="6.00" fill="#b0b0b0"/>
<rect x="1043.22" y="68.00" width="2.00" height="4.80" fill="#959595"/>
<rect x="1050.18" y="68.00" width="1.00" height="6.00" fill="#b0b0b0"/>
<rect x="1056.14" y="68.00" width="2.00" height="4.80" fill="#959595"/>
<rect x="1063.10" y="68.00" width="1.20" height="13.00" fill="#c0c0c0"/>
<rect x="1069.06" y="68.00" width="2.00" height="4.80" fill="#959595"/>
<rect x="1076.02" y="68.00" width="1.00" height="6.00" fill="#b0b0b0"/>
<rect x="1081.98" y="68.00" width="2.00" height="4.80" fill="#959595"/>
<rect x="1088.94" y="68.00" width="1.00" height="6.00" fill="#b0b0b0"/>
<rect x="1094.90" y="68.00" width="2.00" height="4.80" fill="#959595"/>
<rect x="1101.86" y="68.00" width="1.00" height="6.00" fill="#b0b0b0"/>
<rect x="1107.82" y="68.00" width="2.00" height="4.80" fill="#959595"/>
<rect x="1114.78" y="68.00" width="1.00" height="6.00" fill="#b0b0b0"/>
<rect x="1120.74" y="68.00" width="2.00" height="4.80" fill="#959595"/>
<rect x="1127.70" y="68.00" width="1.00" height="6.00" fill="#b0b0b0"/>
<rect x="1133.66" y="68.00" width="2.00" height="4.80" fill="#959595"/>
<rect x="1140.62" y="68.00" width="1.00" height="6.00" fill="#b0b0b0"/>
<rect x="1146.58" y="68.00" width="2.00" height="4.80" fill="#959595"/>
<rect x="1153.54" y="68.00" width="1.00" height="6.00" fill="#b0b0b0"/>
<rect x="1159.50" y="68.00" width="2.00" height="4.80" fill="#959595"/>
<rect x="1166.46" y="68.00" width="1.00" height="6.00" fill="#b0b0b0"/>
<rect x="1172.42" y="68.00" width="2.00" height="4.80" fill="#959595"/>
<rect x="1179.38" y="68.00" width="1.00" height="6.00" fill="#b0b0b0"/>
<rect x="1185.34" y="68.00" width="2.00" height="4.80" fill="#959595"/>
<rect x="1192.30" y="68.00" width="1.20" height="13.00" fill="#c0c0c0"/>
<rect x="1198.26" y="68.00" width="2.00" height="4.80" fill="#959595"/>
<rect x="1205.22" y="68.00" width="1.00" height="6.00" fill="#b0b0b0"/>
<rect x="1211.18" y="68.00" width="2.00" height="4.80" fill="#959595"/>
<rect x="1218.14" y="68.00" width="1.00" height="6.00" fill="#b0b0b0"/>
<rect x="1224.10" y="68.00" width="2.00" height="4.80" fill="#959595"/>
<rect x="1231.06" y="68.00" width="1.00" height="6.00" fill="#b0b0b0"/>
<rect x="1237.02" y="68.00" width="2.00" height="4.80" fill="#959595"/>
<rect x="1243.98" y="68.00" width="1.00" height="6.00" fill="#b0b0b0"/>
<rect x="1249.94" y="68.00" width="2.00" height="4.80" fill="#959595"/>
<rect x="1256.90" y="68.00" width="1.00" height="6.00" fill="#b0b0b0"/>
<rect x="1262.86" y="68.00" width="2.00" height="4.80" fill="#959595"/>
<rect x="1269.82" y="68.00" width="1.00" height="6.00" fill="#b0b0b0"/>
<rect x="1275.78" y="68.00" width="2.00" height="4.80" fill="#959595"/>
<rect x="1282.74" y="68.00" width="1.00" height="6.00" fill="#b0b0b0"/>
<rect x="1288.70" y="68.00" width="2.00" height="4.80" fill="#959595"/>
<rect x="1295.66" y="68.00" width="1.00" height="6.00" fill="#b0b0b0"/>
<rect x="1301.62" y="68.00" width="2.00" height="4.80" fill="#959595"/>
<rect x="1308.58" y="68.00" width="1.00" height="6.00" fill="#b0b0b0"/>
<rect x="1314.54" y="68.00" width="2.00" height="4.80" fill="#959595"/>
<rect x="1321.50" y="68.00" width="1.20" height="13.00" fill="#c0c0c0"/>
<rect x="1327.46" y="68.00" width="2.00" height="4.80" fill="#959595"/>
<rect x="1334.42" y="68.00" width="1.00" height="6.00" fill="#b0b0b0"/>
<rect x="1340.38" y="68.00" width="2.00" height="4.80" fill="#959595"/>
<rect x="1347.34" y="68.00" width="1.00" height="6.00" fill="#b0b0b0"/>
<rect x="1353.30" y="68.00" width="2.00" height="4.80" fill="#959595"/>
<rect x="1360.26" y="68.00" width="1.00" height="6.00" fill="#b0b0b0"/>
<rect x="1366.22" y="68.00" width="2.00" height="4.80" fill="#959595"/>
<rect x="1373.18" y="68.00" width="1.00" height="6.00" fill="#b0b0b0"/>
<rect x="1379.14" y="68.00" width="2.00" height="4.80" fill="#959595"/>
<rect x="1386.10" y="68.00" width="1.00" height="6.00" fill="#b0b0b0"/>
<rect x="1392.06" y="68.00" width="2.00" height="4.80" fill="#959595"/>
<rect x="1399.02" y="68.00" width="1.00" height="6.00" fill="#b0b0b0"/>
<rect x="1404.98" y="68.00" width="2.00" height="4.80" fill="#959595"/>
<rect x="1411.94" y="68.00" width="1.00" height="6.00" fill="#b0b0b0"/>
<rect x="1417.90" y="68.00" width="2.00" height="4.80" fill="#959595"/>
<rect x="1424.86" y="68.00" width="1.00" height="6.00" fill="#b0b0b0"/>
<rect x="1430.82" y="68.00" width="2.00" height="4.80" fill="#959595"/>
<rect x="1437.78" y="68.00" width="1.00" height="6.00" fill="#b0b0b0"/>
<rect x="1443.74" y="68.00" width="2.00" height="4.80" fill="#959595"/>
<rect x="1450.70" y="68.00" width="1.20" height="13.00" fill="#c0c0c0"/>
<rect x="1456.66" y="68.00" width="2.00" height="4.80" fill="#959595"/>
<rect x="1463.62" y="68.00" width="1.00" height="6.00" fill="#b0b0b0"/>
<rect x="1469.58" y="68.00" width="2.00" height="4.80" fill="#959595"/>
<rect x="1476.54" y="68.00" width="1.00" height="6.00" fill="#b0b0b0"/>
<rect x="1482.50" y="68.00" width="2.00" height="4.80" fill="#959595"/>
<rect x="1489.46" y="68.00" width="1.00" height="6.00" fill="#b0b0b0"/>
<rect x="1495.42" y="68.00" width="2.00" height="4.80" fill="#959595"/>
<rect x="1502.38" y="68.00" width="1.00" height="6.00" fill="#b0b0b0"/>
<rect x="1508.34" y="68.00" width="2.00" height="4.80" fill="#959595"/>
<rect x="1515.30" y="68.00" width="1.00" height="6.00" fill="#b0b0b0"/>
<rect x="1521.26" y="68.00" width="2.00" height="4.80" fill="#959595"/>
<rect x="1528.22" y="68.00" width="1.00" height="6.00" fill="#b0b0b0"/>
<text x="30.0" y="94.0" font-size="14" fill="#d8c8c8" text-anchor="middle">-2m 55s</text>
<text x="159.2" y="94.0" font-size="14" fill="#d8c8c8" text-anchor="middle">-1m 56s</text>
<text x="288.4" y="94.0" font-size="14" fill="#d8c8c8" text-anchor="middle">-58s</text>
<text x="417.6" y="94.0" font-size="14" fill="#d8c8c8" text-anchor="middle">0</text>
<text x="546.8" y="94.0" font-size="14" fill="#c8c8c8" text-anchor="middle">58s</text>
<text x="676.0" y="94.0" font-size="14" fill="#c8c8c8" text-anchor="middle">1m 56s</text>
<text x="805.2" y="94.0" font-size="14" fill="#c8c8c8" text-anchor="middle">2m 55s</text>
<text x="934.4" y="94.0" font-size="14" fill="#c8c8c8" text-anchor="middle">3m 53s</text>
<text x="1063.6" y="94.0" font-size="14" fill="#c8c8c8" text-anchor="middle">4m 51s</text>
<text x="1192.8" y="94.0" font-size="14" fill="#c8c8c8" text-anchor="middle">5m 49s</text>
<text x="1322.0" y="94.0" font-size="14" fill="#c8c8c8" text-anchor="middle">6m 47s</text>
<text x="1451.2" y="94.0" font-size="14" fill="#c8c8c8" text-anchor="middle">7m 46s</text>
<rect x="41.00" y="98.00" width="1492.00" height="18.00" fill="#383838"/>
<text x="43.6" y="112.0" font-size="13.8" fill="#555555" textLength="69.4" lengthAdjust="spacingAndGlyphs">Bookmarks</text>
<polygon points="120.5,102 126,107 120.5,112" fill="none" stroke="#555" stroke-width="1"/>
<rect x="41.00" y="116.00" width="1492.00" height="3.00" fill="#191919"/>
<rect x="417.60" y="119.00" width="1113.40" height="252.00" fill="#4a4a4a"/>
<rect x="41.00" y="119.00" width="376.60" height="252.00" fill="#574b4b"/>
<rect x="416.50" y="98.00" width="1.20" height="18.00" fill="#5d735d"/>
<rect x="427.00" y="98.00" width="1.50" height="18.00" fill="#5a6e5a"/>
<rect x="435.90" y="98.00" width="1.20" height="18.00" fill="#5d735d"/>
<rect x="440.30" y="98.00" width="1.20" height="18.00" fill="#5d735d"/>
<rect x="446.50" y="98.00" width="1.20" height="18.00" fill="#5d735d"/>
<rect x="459.50" y="98.00" width="1.20" height="18.00" fill="#5d735d"/>
<rect x="491.30" y="98.00" width="1.20" height="18.00" fill="#5d735d"/>
<rect x="496.00" y="98.00" width="4.60" height="18.00" fill="#5a6e5a"/>
<rect x="514.10" y="98.00" width="1.20" height="18.00" fill="#5d735d"/>
<rect x="542.00" y="98.00" width="4.00" height="18.00" fill="#5a6e5a"/>
<rect x="554.50" y="98.00" width="1.20" height="18.00" fill="#5d735d"/>
<rect x="556.50" y="98.00" width="1.20" height="18.00" fill="#5d735d"/>
<rect x="574.50" y="98.00" width="1.20" height="18.00" fill="#5d735d"/>
<rect x="580.90" y="98.00" width="1.20" height="18.00" fill="#5d735d"/>
<rect x="588.00" y="98.00" width="1.20" height="18.00" fill="#5d735d"/>
<rect x="602.90" y="98.00" width="1.20" height="18.00" fill="#5d735d"/>
<rect x="606.00" y="98.00" width="2.70" height="18.00" fill="#5a6e5a"/>
<rect x="611.50" y="98.00" width="1.20" height="18.00" fill="#5d735d"/>
<rect x="619.00" y="98.00" width="2.00" height="18.00" fill="#5a6e5a"/>
<rect x="647.40" y="98.00" width="5.40" height="18.00" fill="#5a6e5a"/>
<rect x="679.00" y="98.00" width="2.00" height="18.00" fill="#5a6e5a"/>
<rect x="696.10" y="98.00" width="1.20" height="18.00" fill="#5d735d"/>
<rect x="705.10" y="98.00" width="1.20" height="18.00" fill="#5d735d"/>
<rect x="700.50" y="98.00" width="1.20" height="18.00" fill="#5d735d"/>
<rect x="709.20" y="98.00" width="1.20" height="18.00" fill="#5d735d"/>
<rect x="713.50" y="98.00" width="1.20" height="18.00" fill="#5d735d"/>
<rect x="726.50" y="98.00" width="1.20" height="18.00" fill="#5d735d"/>
<rect x="747.50" y="98.00" width="1.20" height="18.00" fill="#5d735d"/>
<rect x="774.70" y="98.00" width="1.80" height="18.00" fill="#5a6e5a"/>
<rect x="778.50" y="98.00" width="1.20" height="18.00" fill="#5d735d"/>
<rect x="783.90" y="98.00" width="1.20" height="18.00" fill="#5d735d"/>
<rect x="789.70" y="98.00" width="1.70" height="18.00" fill="#5a6e5a"/>
<rect x="800.50" y="98.00" width="1.20" height="18.00" fill="#5d735d"/>
<rect x="805.90" y="98.00" width="1.20" height="18.00" fill="#5d735d"/>
<rect x="823.50" y="98.00" width="1.20" height="18.00" fill="#5d735d"/>
<rect x="873.50" y="98.00" width="1.20" height="18.00" fill="#5d735d"/>
<rect x="883.00" y="98.00" width="1.60" height="18.00" fill="#5a6e5a"/>
<rect x="886.80" y="98.00" width="1.20" height="18.00" fill="#5d735d"/>
<rect x="891.20" y="98.00" width="1.20" height="18.00" fill="#5d735d"/>
<rect x="901.50" y="98.00" width="1.20" height="18.00" fill="#5d735d"/>
<rect x="912.30" y="98.00" width="1.20" height="18.00" fill="#5d735d"/>
<rect x="918.50" y="98.00" width="1.20" height="18.00" fill="#5d735d"/>
<rect x="948.30" y="98.00" width="1.20" height="18.00" fill="#5d735d"/>
<rect x="1022.90" y="98.00" width="1.20" height="18.00" fill="#5d735d"/>
<rect x="1088.90" y="98.00" width="1.20" height="18.00" fill="#5d735d"/>
<rect x="1096.80" y="98.00" width="1.20" height="18.00" fill="#5d735d"/>
<rect x="1102.00" y="98.00" width="1.20" height="18.00" fill="#5d735d"/>
<rect x="1116.60" y="98.00" width="1.80" height="18.00" fill="#5a6e5a"/>
<rect x="1119.50" y="98.00" width="1.20" height="18.00" fill="#5d735d"/>
<rect x="1169.70" y="98.00" width="1.20" height="18.00" fill="#5d735d"/>
<rect x="1210.20" y="98.00" width="1.20" height="18.00" fill="#5d735d"/>
<rect x="1219.90" y="98.00" width="1.20" height="18.00" fill="#5d735d"/>
<rect x="1226.00" y="98.00" width="1.20" height="18.00" fill="#5d735d"/>
<rect x="1244.50" y="98.00" width="1.20" height="18.00" fill="#5d735d"/>
<rect x="1319.40" y="98.00" width="1.20" height="18.00" fill="#5d735d"/>
<rect x="1332.50" y="98.00" width="1.20" height="18.00" fill="#5d735d"/>
<rect x="1392.50" y="98.00" width="1.20" height="18.00" fill="#5d735d"/>
<rect x="1394.90" y="98.00" width="1.20" height="18.00" fill="#5d735d"/>
<rect x="1461.40" y="98.00" width="1.20" height="18.00" fill="#5d735d"/>
<rect x="1465.50" y="98.00" width="1.20" height="18.00" fill="#5d735d"/>
<text x="449.0" y="111.7" font-size="13.5" fill="#a6e3a0" textLength="8.5" lengthAdjust="spacingAndGlyphs">P</text>
<text x="463.6" y="111.7" font-size="13.5" fill="#a6e3a0" textLength="26.4" lengthAdjust="spacingAndGlyphs">PSO</text>
<text x="503.0" y="111.7" font-size="13.5" fill="#a6e3a0" textLength="9.0" lengthAdjust="spacingAndGlyphs">P</text>
<text x="518.0" y="111.7" font-size="13.5" fill="#a6e3a0" textLength="17.7" lengthAdjust="spacingAndGlyphs">GC</text>
<text x="559.5" y="111.7" font-size="13.5" fill="#a6e3a0" textLength="8.5" lengthAdjust="spacingAndGlyphs">P</text>
<text x="591.0" y="111.7" font-size="13.5" fill="#a6e3a0" textLength="9.0" lengthAdjust="spacingAndGlyphs">G</text>
<text x="624.5" y="111.7" font-size="13.5" fill="#a6e3a0" textLength="22.9" lengthAdjust="spacingAndGlyphs">Req</text>
<text x="657.0" y="111.7" font-size="13.5" fill="#a6e3a0" textLength="18.5" lengthAdjust="spacingAndGlyphs">GC</text>
<text x="684.0" y="111.7" font-size="13.5" fill="#a6e3a0" textLength="9.0" lengthAdjust="spacingAndGlyphs">P</text>
<text x="717.6" y="111.7" font-size="13.5" fill="#a6e3a0" textLength="8.8" lengthAdjust="spacingAndGlyphs">P</text>
<text x="730.8" y="111.7" font-size="13.5" fill="#a6e3a0" textLength="8.8" lengthAdjust="spacingAndGlyphs">G</text>
<text x="751.0" y="111.7" font-size="13.5" fill="#a6e3a0" textLength="17.6" lengthAdjust="spacingAndGlyphs">PS</text>
<text x="808.0" y="111.7" font-size="13.5" fill="#a6e3a0" textLength="9.0" lengthAdjust="spacingAndGlyphs">P</text>
<text x="826.6" y="111.7" font-size="13.5" fill="#a6e3a0" textLength="44.0" lengthAdjust="spacingAndGlyphs">Reques</text>
<text x="921.6" y="111.7" font-size="13.5" fill="#a6e3a0" textLength="16.7" lengthAdjust="spacingAndGlyphs">PS</text>
<text x="952.3" y="111.7" font-size="13.5" fill="#a6e3a0" textLength="17.7" lengthAdjust="spacingAndGlyphs">GC</text>
<text x="1027.0" y="111.7" font-size="13.5" fill="#a6e3a0" textLength="18.4" lengthAdjust="spacingAndGlyphs">GC</text>
<text x="1105.0" y="111.7" font-size="13.5" fill="#a6e3a0" textLength="9.0" lengthAdjust="spacingAndGlyphs">R</text>
<text x="1123.6" y="111.7" font-size="13.5" fill="#a6e3a0" textLength="40.4" lengthAdjust="spacingAndGlyphs">PSO/E</text>
<text x="1173.8" y="111.7" font-size="13.5" fill="#a6e3a0" textLength="18.2" lengthAdjust="spacingAndGlyphs">GC</text>
<text x="1229.0" y="111.7" font-size="13.5" fill="#a6e3a0" textLength="9.0" lengthAdjust="spacingAndGlyphs">P</text>
<text x="1249.4" y="111.7" font-size="13.5" fill="#a6e3a0" textLength="17.6" lengthAdjust="spacingAndGlyphs">GC</text>
<text x="1322.4" y="111.7" font-size="13.5" fill="#a6e3a0" textLength="8.2" lengthAdjust="spacingAndGlyphs">G</text>
<text x="1337.0" y="111.7" font-size="13.5" fill="#a6e3a0" textLength="49.4" lengthAdjust="spacingAndGlyphs">Request</text>
<text x="1399.5" y="111.7" font-size="13.5" fill="#a6e3a0" textLength="56.5" lengthAdjust="spacingAndGlyphs">RequestL</text>
<text x="1469.0" y="111.7" font-size="13.5" fill="#a6e3a0" textLength="18.3" lengthAdjust="spacingAndGlyphs">GC</text>
<rect x="41.00" y="168.00" width="1490.00" height="1.00" fill="#3d3d3d"/>
<rect x="41.00" y="219.00" width="1490.00" height="1.00" fill="#3d3d3d"/>
<rect x="41.00" y="270.00" width="1490.00" height="1.00" fill="#3d3d3d"/>
<rect x="41.00" y="320.00" width="1490.00" height="1.00" fill="#3d3d3d"/>
<path d="M435.00 367H436.00V371H435.00ZM436.00 367H437.00V371H436.00ZM437.00 368H438.00V371H437.00ZM438.00 367H439.00V371H438.00ZM439.00 368H440.00V371H439.00ZM440.00 367H441.00V371H440.00ZM441.00 367H442.00V371H441.00ZM442.00 368H443.00V371H442.00ZM443.00 367H444.00V371H443.00ZM444.00 367H445.00V371H444.00ZM445.00 367H446.00V371H445.00ZM446.00 367H447.00V371H446.00ZM447.00 367H448.00V371H447.00ZM448.00 368H449.00V371H448.00ZM449.00 367H450.00V371H449.00ZM450.00 367H451.00V371H450.00ZM451.00 368H452.00V371H451.00ZM452.00 368H453.00V371H452.00ZM453.00 368H454.00V371H453.00ZM454.00 367H455.00V371H454.00ZM455.00 368H456.00V371H455.00ZM456.00 367H457.00V371H456.00ZM457.00 368H458.00V371H457.00ZM458.00 367H459.00V371H458.00ZM459.00 367H460.00V371H459.00ZM460.00 367H461.00V371H460.00ZM461.00 367H462.00V371H461.00ZM462.00 368H463.00V371H462.00ZM463.00 367H464.00V371H463.00ZM464.00 368H465.00V371H464.00ZM465.00 368H466.00V371H465.00ZM466.00 367H467.00V371H466.00ZM467.00 368H468.00V371H467.00ZM468.00 367H469.00V371H468.00ZM469.00 367H470.00V371H469.00ZM470.00 367H471.00V371H470.00ZM471.00 368H472.00V371H471.00ZM472.00 367H473.00V371H472.00ZM473.00 367H474.00V371H473.00ZM474.00 368H475.00V371H474.00ZM475.00 367H476.00V371H475.00ZM476.00 367H477.00V371H476.00ZM477.00 368H478.00V371H477.00ZM478.00 368H479.00V371H478.00ZM479.00 367H480.00V371H479.00ZM480.00 368H481.00V371H480.00ZM481.00 368H482.00V371H481.00ZM482.00 368H483.00V371H482.00ZM483.00 368H484.00V371H483.00ZM484.00 367H485.00V371H484.00ZM491.00 367H492.00V371H491.00ZM492.00 367H493.00V371H492.00ZM493.00 367H494.00V371H493.00ZM494.00 367H495.00V371H494.00ZM495.00 367H496.00V371H495.00ZM501.00 285H502.00V371H501.00ZM502.00 282H503.00V371H502.00ZM503.00 286H504.00V371H503.00ZM504.00 287H505.00V371H504.00ZM505.00 285H506.00V371H505.00ZM506.00 287H507.00V371H506.00ZM507.00 284H508.00V371H507.00ZM508.00 286H509.00V371H508.00ZM509.00 286H510.00V371H509.00ZM510.00 286H511.00V371H510.00ZM511.00 285H512.00V371H511.00ZM512.00 287H513.00V371H512.00ZM513.00 288H514.00V371H513.00ZM514.00 285H515.00V371H514.00ZM515.00 286H516.00V371H515.00ZM516.00 282H517.00V371H516.00ZM517.00 286H518.00V371H517.00ZM518.00 286H519.00V371H518.00ZM519.00 288H520.00V371H519.00ZM520.00 287H521.00V371H520.00ZM521.00 284H522.00V371H521.00ZM522.00 284H523.00V371H522.00ZM523.00 286H524.00V371H523.00ZM524.00 282H525.00V371H524.00ZM525.00 285H526.00V371H525.00ZM526.00 283H527.00V371H526.00ZM527.00 283H528.00V371H527.00ZM528.00 282H529.00V371H528.00ZM529.00 287H530.00V371H529.00ZM530.00 283H531.00V371H530.00ZM531.00 283H532.00V371H531.00ZM532.00 284H533.00V371H532.00ZM533.00 287H534.00V371H533.00ZM534.00 282H535.00V371H534.00ZM535.00 285H536.00V371H535.00ZM536.00 285H537.00V371H536.00ZM537.00 287H538.00V371H537.00ZM538.00 287H539.00V371H538.00ZM539.00 287H540.00V371H539.00ZM540.00 341H541.00V371H540.00ZM541.00 343H542.00V371H541.00ZM542.00 352H543.00V371H542.00ZM543.00 340H544.00V371H543.00ZM544.00 341H545.00V371H544.00ZM545.00 346H546.00V371H545.00ZM546.00 337H547.00V371H546.00ZM547.00 343H548.00V371H547.00ZM548.00 352H549.00V371H548.00ZM549.00 345H550.00V371H549.00ZM550.00 324H551.00V371H550.00ZM551.00 349H552.00V371H551.00ZM552.00 350H553.00V371H552.00ZM553.00 320H554.00V371H553.00ZM554.00 318H555.00V371H554.00ZM555.00 321H556.00V371H555.00ZM556.00 318H557.00V371H556.00ZM557.00 318H558.00V371H557.00ZM558.00 319H559.00V371H558.00ZM559.00 318H560.00V371H559.00ZM560.00 319H561.00V371H560.00ZM561.00 318H562.00V371H561.00ZM562.00 318H563.00V371H562.00ZM563.00 318H564.00V371H563.00ZM564.00 318H565.00V371H564.00ZM565.00 319H566.00V371H565.00ZM566.00 318H567.00V371H566.00ZM567.00 322H568.00V371H567.00ZM568.00 321H569.00V371H568.00ZM569.00 318H570.00V371H569.00ZM570.00 319H571.00V371H570.00ZM571.00 319H572.00V371H571.00ZM572.00 319H573.00V371H572.00ZM573.00 318H574.00V371H573.00ZM574.00 322H575.00V371H574.00ZM575.00 322H576.00V371H575.00ZM576.00 320H577.00V371H576.00ZM577.00 320H578.00V371H577.00ZM578.00 318H579.00V371H578.00ZM579.00 318H580.00V371H579.00ZM580.00 319H581.00V371H580.00ZM581.00 319H582.00V371H581.00ZM582.00 322H583.00V371H582.00ZM583.00 318H584.00V371H583.00ZM584.00 318H585.00V371H584.00ZM585.00 322H586.00V371H585.00ZM586.00 320H587.00V371H586.00ZM587.00 318H588.00V371H587.00ZM588.00 320H589.00V371H588.00ZM589.00 318H590.00V371H589.00ZM590.00 320H591.00V371H590.00ZM591.00 322H592.00V371H591.00ZM592.00 322H593.00V371H592.00ZM593.00 321H594.00V371H593.00ZM594.00 319H595.00V371H594.00ZM595.00 319H596.00V371H595.00ZM596.00 318H597.00V371H596.00ZM597.00 321H598.00V371H597.00ZM598.00 320H599.00V371H598.00ZM599.00 321H600.00V371H599.00ZM600.00 319H601.00V371H600.00ZM601.00 319H602.00V371H601.00ZM602.00 321H603.00V371H602.00ZM603.00 322H604.00V371H603.00ZM604.00 322H605.00V371H604.00ZM630.00 356H631.00V371H630.00ZM631.00 357H632.00V371H631.00ZM632.00 356H633.00V371H632.00ZM633.00 356H634.00V371H633.00ZM634.00 356H635.00V371H634.00ZM635.00 356H636.00V371H635.00ZM636.00 280H637.00V371H636.00ZM637.00 280H638.00V371H637.00ZM638.00 281H639.00V371H638.00ZM639.00 281H640.00V371H639.00ZM640.00 283H641.00V371H640.00ZM641.00 284H642.00V371H641.00ZM642.00 282H643.00V371H642.00ZM643.00 284H644.00V371H643.00ZM644.00 284H645.00V371H644.00ZM645.00 284H646.00V371H645.00ZM646.00 281H647.00V371H646.00ZM651.00 281H652.00V371H651.00ZM652.00 281H653.00V371H652.00ZM653.00 281H654.00V371H653.00ZM654.00 281H655.00V371H654.00ZM655.00 284H656.00V371H655.00ZM656.00 286H657.00V371H656.00ZM657.00 285H658.00V371H657.00ZM658.00 283H659.00V371H658.00ZM659.00 284H660.00V371H659.00ZM660.00 285H661.00V371H660.00ZM661.00 280H662.00V371H661.00ZM662.00 284H663.00V371H662.00ZM663.00 286H664.00V371H663.00ZM664.00 285H665.00V371H664.00ZM665.00 285H666.00V371H665.00ZM666.00 283H667.00V371H666.00ZM667.00 281H668.00V371H667.00ZM668.00 285H669.00V371H668.00ZM669.00 282H670.00V371H669.00ZM670.00 285H671.00V371H670.00ZM671.00 286H672.00V371H671.00ZM672.00 282H673.00V371H672.00ZM673.00 282H674.00V371H673.00ZM674.00 286H675.00V371H674.00ZM675.00 284H676.00V371H675.00ZM676.00 281H677.00V371H676.00ZM677.00 281H678.00V371H677.00ZM678.00 281H679.00V371H678.00ZM679.00 286H680.00V371H679.00ZM680.00 285H681.00V371H680.00ZM681.00 281H682.00V371H681.00ZM682.00 285H683.00V371H682.00ZM683.00 286H684.00V371H683.00ZM684.00 284H685.00V371H684.00ZM685.00 282H686.00V371H685.00ZM686.00 283H687.00V371H686.00ZM687.00 281H688.00V371H687.00ZM688.00 280H689.00V371H688.00ZM689.00 286H690.00V371H689.00ZM690.00 284H691.00V371H690.00ZM691.00 283H692.00V371H691.00ZM692.00 286H693.00V371H692.00ZM693.00 283H694.00V371H693.00ZM694.00 285H695.00V371H694.00ZM695.00 285H696.00V371H695.00ZM696.00 281H697.00V371H696.00ZM697.00 318H698.00V371H697.00ZM698.00 318H699.00V371H698.00ZM699.00 319H700.00V371H699.00ZM700.00 317H701.00V371H700.00ZM701.00 320H702.00V371H701.00ZM702.00 323H703.00V371H702.00ZM703.00 321H704.00V371H703.00ZM704.00 322H705.00V371H704.00ZM705.00 308H706.00V371H705.00ZM706.00 295H707.00V371H706.00ZM707.00 317H708.00V371H707.00ZM708.00 325H709.00V371H708.00ZM709.00 319H710.00V371H709.00ZM710.00 323H711.00V371H710.00ZM711.00 316H712.00V371H711.00ZM712.00 318H713.00V371H712.00ZM713.00 326H714.00V371H713.00ZM714.00 323H715.00V371H714.00ZM715.00 328H716.00V371H715.00ZM716.00 324H717.00V371H716.00ZM717.00 322H718.00V371H717.00ZM718.00 321H719.00V371H718.00ZM719.00 322H720.00V371H719.00ZM720.00 325H721.00V371H720.00ZM721.00 328H722.00V371H721.00ZM722.00 323H723.00V371H722.00ZM723.00 327H724.00V371H723.00ZM724.00 317H725.00V371H724.00ZM725.00 282H726.00V371H725.00ZM726.00 283H727.00V371H726.00ZM727.00 282H728.00V371H727.00ZM728.00 286H729.00V371H728.00ZM729.00 287H730.00V371H729.00ZM730.00 288H731.00V371H730.00ZM731.00 283H732.00V371H731.00ZM732.00 286H733.00V371H732.00ZM733.00 286H734.00V371H733.00ZM734.00 283H735.00V371H734.00ZM735.00 287H736.00V371H735.00ZM736.00 288H737.00V371H736.00ZM737.00 283H738.00V371H737.00ZM738.00 288H739.00V371H738.00ZM739.00 284H740.00V371H739.00ZM740.00 285H741.00V371H740.00ZM741.00 288H742.00V371H741.00ZM742.00 287H743.00V371H742.00ZM743.00 283H744.00V371H743.00ZM744.00 285H745.00V371H744.00ZM745.00 285H746.00V371H745.00ZM746.00 284H747.00V371H746.00ZM747.00 283H748.00V371H747.00ZM748.00 284H749.00V371H748.00ZM749.00 286H750.00V371H749.00ZM750.00 282H751.00V371H750.00ZM751.00 285H752.00V371H751.00ZM752.00 285H753.00V371H752.00ZM753.00 282H754.00V371H753.00ZM754.00 284H755.00V371H754.00ZM755.00 286H756.00V371H755.00ZM756.00 285H757.00V371H756.00ZM757.00 282H758.00V371H757.00ZM758.00 288H759.00V371H758.00ZM759.00 287H760.00V371H759.00ZM760.00 288H761.00V371H760.00ZM761.00 282H762.00V371H761.00ZM762.00 283H763.00V371H762.00ZM763.00 282H764.00V371H763.00ZM764.00 287H765.00V371H764.00ZM765.00 284H766.00V371H765.00ZM766.00 283H767.00V371H766.00ZM767.00 285H768.00V371H767.00ZM768.00 288H769.00V371H768.00ZM769.00 287H770.00V371H769.00ZM770.00 283H771.00V371H770.00ZM771.00 283H772.00V371H771.00ZM772.00 288H773.00V371H772.00ZM773.00 285H774.00V371H773.00ZM774.00 286H775.00V371H774.00ZM775.00 303H776.00V371H775.00ZM776.00 301H777.00V371H776.00ZM777.00 329H778.00V371H777.00ZM778.00 322H779.00V371H778.00ZM779.00 322H780.00V371H779.00ZM780.00 326H781.00V371H780.00ZM781.00 328H782.00V371H781.00ZM782.00 324H783.00V371H782.00ZM783.00 327H784.00V371H783.00ZM784.00 323H785.00V371H784.00ZM785.00 322H786.00V371H785.00ZM786.00 325H787.00V371H786.00ZM787.00 330H788.00V371H787.00ZM788.00 327H789.00V371H788.00ZM789.00 314H790.00V371H789.00ZM790.00 322H791.00V371H790.00ZM791.00 328H792.00V371H791.00ZM792.00 327H793.00V371H792.00ZM793.00 323H794.00V371H793.00ZM794.00 278H795.00V371H794.00ZM795.00 282H796.00V371H795.00ZM796.00 279H797.00V371H796.00ZM797.00 284H798.00V371H797.00ZM798.00 282H799.00V371H798.00ZM799.00 280H800.00V371H799.00ZM800.00 269H801.00V371H800.00ZM801.00 275H802.00V371H801.00ZM802.00 277H803.00V371H802.00ZM803.00 275H804.00V371H803.00ZM804.00 283H805.00V371H804.00ZM805.00 277H806.00V371H805.00ZM806.00 277H807.00V371H806.00ZM807.00 276H808.00V371H807.00ZM808.00 277H809.00V371H808.00ZM809.00 284H810.00V371H809.00ZM810.00 277H811.00V371H810.00ZM811.00 277H812.00V371H811.00ZM812.00 274H813.00V371H812.00ZM813.00 279H814.00V371H813.00ZM814.00 276H815.00V371H814.00ZM815.00 274H816.00V371H815.00ZM816.00 275H817.00V371H816.00ZM817.00 263H818.00V371H817.00ZM818.00 323H819.00V371H818.00ZM819.00 326H820.00V371H819.00ZM820.00 328H821.00V371H820.00ZM821.00 331H822.00V371H821.00ZM822.00 324H823.00V371H822.00ZM823.00 322H824.00V371H823.00ZM824.00 305H825.00V371H824.00ZM825.00 331H826.00V371H825.00ZM826.00 329H827.00V371H826.00ZM827.00 321H828.00V371H827.00ZM828.00 326H829.00V371H828.00ZM829.00 330H830.00V371H829.00ZM830.00 327H831.00V371H830.00ZM831.00 328H832.00V371H831.00ZM832.00 314H833.00V371H832.00ZM833.00 302H834.00V371H833.00ZM834.00 327H835.00V371H834.00ZM835.00 328H836.00V371H835.00ZM836.00 304H837.00V371H836.00ZM837.00 329H838.00V371H837.00ZM838.00 326H839.00V371H838.00ZM839.00 320H840.00V371H839.00ZM840.00 312H841.00V371H840.00ZM841.00 329H842.00V371H841.00ZM842.00 329H843.00V371H842.00ZM843.00 326H844.00V371H843.00ZM844.00 326H845.00V371H844.00ZM845.00 329H846.00V371H845.00ZM846.00 319H847.00V371H846.00ZM847.00 323H848.00V371H847.00ZM848.00 323H849.00V371H848.00ZM849.00 308H850.00V371H849.00ZM850.00 328H851.00V371H850.00ZM851.00 328H852.00V371H851.00ZM852.00 326H853.00V371H852.00ZM853.00 302H854.00V371H853.00ZM854.00 322H855.00V371H854.00ZM855.00 316H856.00V371H855.00ZM856.00 330H857.00V371H856.00ZM857.00 325H858.00V371H857.00ZM858.00 322H859.00V371H858.00ZM859.00 322H860.00V371H859.00ZM860.00 321H861.00V371H860.00ZM861.00 332H862.00V371H861.00ZM862.00 330H863.00V371H862.00ZM863.00 331H864.00V371H863.00ZM864.00 323H865.00V371H864.00ZM865.00 320H866.00V371H865.00ZM866.00 326H867.00V371H866.00ZM867.00 323H868.00V371H867.00ZM868.00 324H869.00V371H868.00ZM869.00 309H870.00V371H869.00ZM870.00 330H871.00V371H870.00ZM871.00 331H872.00V371H871.00ZM872.00 331H873.00V371H872.00ZM873.00 324H874.00V371H873.00ZM874.00 332H875.00V371H874.00ZM875.00 324H876.00V371H875.00ZM876.00 315H877.00V371H876.00ZM877.00 330H878.00V371H877.00ZM878.00 332H879.00V371H878.00ZM879.00 323H880.00V371H879.00ZM880.00 338H881.00V371H880.00ZM881.00 339H882.00V371H881.00ZM882.00 344H883.00V371H882.00ZM883.00 343H884.00V371H883.00ZM884.00 342H885.00V371H884.00ZM885.00 341H886.00V371H885.00ZM886.00 343H887.00V371H886.00ZM887.00 344H888.00V371H887.00ZM888.00 340H889.00V371H888.00ZM889.00 342H890.00V371H889.00ZM890.00 336H891.00V371H890.00ZM891.00 342H892.00V371H891.00ZM892.00 340H893.00V371H892.00ZM893.00 342H894.00V371H893.00ZM894.00 341H895.00V371H894.00ZM895.00 338H896.00V371H895.00ZM896.00 336H897.00V371H896.00ZM897.00 343H898.00V371H897.00ZM898.00 337H899.00V371H898.00ZM899.00 340H900.00V371H899.00ZM900.00 339H901.00V371H900.00ZM901.00 338H902.00V371H901.00ZM902.00 342H903.00V371H902.00ZM903.00 344H904.00V371H903.00ZM904.00 338H905.00V371H904.00ZM905.00 341H906.00V371H905.00ZM906.00 338H907.00V371H906.00ZM907.00 340H908.00V371H907.00ZM908.00 339H909.00V371H908.00ZM909.00 337H910.00V371H909.00ZM910.00 337H911.00V371H910.00ZM911.00 338H912.00V371H911.00ZM912.00 329H913.00V371H912.00ZM913.00 320H914.00V371H913.00ZM914.00 330H915.00V371H914.00ZM915.00 319H916.00V371H915.00ZM916.00 319H917.00V371H916.00ZM917.00 319H918.00V371H917.00ZM918.00 321H919.00V371H918.00ZM919.00 329H920.00V371H919.00ZM920.00 323H921.00V371H920.00ZM921.00 324H922.00V371H921.00ZM922.00 310H923.00V371H922.00ZM923.00 330H924.00V371H923.00ZM924.00 324H925.00V371H924.00ZM925.00 329H926.00V371H925.00ZM926.00 321H927.00V371H926.00ZM927.00 323H928.00V371H927.00ZM928.00 330H929.00V371H928.00ZM929.00 322H930.00V371H929.00ZM930.00 327H931.00V371H930.00ZM931.00 324H932.00V371H931.00ZM932.00 318H933.00V371H932.00ZM933.00 329H934.00V371H933.00ZM934.00 329H935.00V371H934.00ZM935.00 312H936.00V371H935.00ZM936.00 324H937.00V371H936.00ZM937.00 330H938.00V371H937.00ZM938.00 326H939.00V371H938.00ZM939.00 323H940.00V371H939.00ZM940.00 315H941.00V371H940.00ZM941.00 318H942.00V371H941.00ZM942.00 324H943.00V371H942.00ZM943.00 317H944.00V371H943.00ZM944.00 324H945.00V371H944.00ZM945.00 300H946.00V371H945.00ZM946.00 323H947.00V371H946.00ZM947.00 318H948.00V371H947.00ZM948.00 315H949.00V371H948.00ZM949.00 321H950.00V371H949.00ZM950.00 324H951.00V371H950.00ZM951.00 322H952.00V371H951.00ZM952.00 318H953.00V371H952.00ZM953.00 325H954.00V371H953.00ZM954.00 315H955.00V371H954.00ZM955.00 325H956.00V371H955.00ZM956.00 319H957.00V371H956.00ZM957.00 328H958.00V371H957.00ZM958.00 315H959.00V371H958.00ZM959.00 321H960.00V371H959.00ZM960.00 318H961.00V371H960.00ZM961.00 325H962.00V371H961.00ZM962.00 318H963.00V371H962.00ZM963.00 319H964.00V371H963.00ZM964.00 318H965.00V371H964.00ZM965.00 326H966.00V371H965.00ZM966.00 329H967.00V371H966.00ZM967.00 317H968.00V371H967.00ZM968.00 321H969.00V371H968.00ZM969.00 328H970.00V371H969.00ZM970.00 320H971.00V371H970.00ZM971.00 329H972.00V371H971.00ZM972.00 302H973.00V371H972.00ZM973.00 328H974.00V371H973.00ZM974.00 325H975.00V371H974.00ZM975.00 328H976.00V371H975.00ZM976.00 317H977.00V371H976.00ZM977.00 306H978.00V371H977.00ZM978.00 320H979.00V371H978.00ZM979.00 320H980.00V371H979.00ZM980.00 315H981.00V371H980.00ZM981.00 320H982.00V371H981.00ZM982.00 317H983.00V371H982.00ZM983.00 318H984.00V371H983.00ZM984.00 327H985.00V371H984.00ZM985.00 306H986.00V371H985.00ZM986.00 320H987.00V371H986.00ZM987.00 318H988.00V371H987.00ZM988.00 314H989.00V371H988.00ZM989.00 326H990.00V371H989.00ZM990.00 308H991.00V371H990.00ZM991.00 328H992.00V371H991.00ZM992.00 326H993.00V371H992.00ZM993.00 320H994.00V371H993.00ZM994.00 329H995.00V371H994.00ZM995.00 319H996.00V371H995.00ZM996.00 319H997.00V371H996.00ZM997.00 315H998.00V371H997.00ZM998.00 328H999.00V371H998.00ZM999.00 318H1000.00V371H999.00ZM1000.00 319H1001.00V371H1000.00ZM1001.00 325H1002.00V371H1001.00ZM1002.00 316H1003.00V371H1002.00ZM1003.00 319H1004.00V371H1003.00ZM1004.00 315H1005.00V371H1004.00ZM1005.00 322H1006.00V371H1005.00ZM1006.00 322H1007.00V371H1006.00ZM1007.00 317H1008.00V371H1007.00ZM1008.00 317H1009.00V371H1008.00ZM1009.00 314H1010.00V371H1009.00ZM1010.00 322H1011.00V371H1010.00ZM1011.00 296H1012.00V371H1011.00ZM1012.00 317H1013.00V371H1012.00ZM1013.00 324H1014.00V371H1013.00ZM1014.00 308H1015.00V371H1014.00ZM1015.00 319H1016.00V371H1015.00ZM1016.00 318H1017.00V371H1016.00ZM1017.00 318H1018.00V371H1017.00ZM1018.00 321H1019.00V371H1018.00ZM1019.00 323H1020.00V371H1019.00ZM1020.00 314H1021.00V371H1020.00ZM1021.00 316H1022.00V371H1021.00ZM1022.00 317H1023.00V371H1022.00ZM1023.00 315H1024.00V371H1023.00ZM1024.00 316H1025.00V371H1024.00ZM1025.00 324H1026.00V371H1025.00ZM1026.00 317H1027.00V371H1026.00ZM1027.00 325H1028.00V371H1027.00ZM1028.00 316H1029.00V371H1028.00ZM1029.00 321H1030.00V371H1029.00ZM1030.00 314H1031.00V371H1030.00ZM1031.00 323H1032.00V371H1031.00ZM1032.00 312H1033.00V371H1032.00ZM1033.00 314H1034.00V371H1033.00ZM1034.00 325H1035.00V371H1034.00ZM1035.00 325H1036.00V371H1035.00ZM1036.00 324H1037.00V371H1036.00ZM1037.00 316H1038.00V371H1037.00ZM1038.00 307H1039.00V371H1038.00ZM1039.00 321H1040.00V371H1039.00ZM1040.00 330H1041.00V371H1040.00ZM1041.00 328H1042.00V371H1041.00ZM1042.00 332H1043.00V371H1042.00ZM1043.00 315H1044.00V371H1043.00ZM1044.00 333H1045.00V371H1044.00ZM1045.00 329H1046.00V371H1045.00ZM1046.00 334H1047.00V371H1046.00ZM1047.00 312H1048.00V371H1047.00ZM1048.00 332H1049.00V371H1048.00ZM1049.00 326H1050.00V371H1049.00ZM1050.00 333H1051.00V371H1050.00ZM1051.00 329H1052.00V371H1051.00ZM1052.00 336H1053.00V371H1052.00ZM1053.00 332H1054.00V371H1053.00ZM1054.00 330H1055.00V371H1054.00ZM1055.00 337H1056.00V371H1055.00ZM1056.00 328H1057.00V371H1056.00ZM1057.00 304H1058.00V371H1057.00ZM1058.00 330H1059.00V371H1058.00ZM1059.00 330H1060.00V371H1059.00ZM1060.00 331H1061.00V371H1060.00ZM1061.00 326H1062.00V371H1061.00ZM1062.00 333H1063.00V371H1062.00ZM1063.00 326H1064.00V371H1063.00ZM1064.00 330H1065.00V371H1064.00ZM1065.00 327H1066.00V371H1065.00ZM1066.00 331H1067.00V371H1066.00ZM1067.00 327H1068.00V371H1067.00ZM1068.00 334H1069.00V371H1068.00ZM1069.00 328H1070.00V371H1069.00ZM1070.00 336H1071.00V371H1070.00ZM1071.00 306H1072.00V371H1071.00ZM1072.00 330H1073.00V371H1072.00ZM1073.00 332H1074.00V371H1073.00ZM1074.00 327H1075.00V371H1074.00ZM1075.00 328H1076.00V371H1075.00ZM1076.00 335H1077.00V371H1076.00ZM1077.00 327H1078.00V371H1077.00ZM1078.00 330H1079.00V371H1078.00ZM1079.00 330H1080.00V371H1079.00ZM1080.00 328H1081.00V371H1080.00ZM1081.00 318H1082.00V371H1081.00ZM1082.00 311H1083.00V371H1082.00ZM1083.00 327H1084.00V371H1083.00ZM1084.00 332H1085.00V371H1084.00ZM1085.00 329H1086.00V371H1085.00ZM1086.00 332H1087.00V371H1086.00ZM1087.00 333H1088.00V371H1087.00ZM1088.00 312H1089.00V371H1088.00ZM1089.00 331H1090.00V371H1089.00ZM1090.00 334H1091.00V371H1090.00ZM1091.00 331H1092.00V371H1091.00ZM1092.00 322H1093.00V371H1092.00ZM1093.00 315H1094.00V371H1093.00ZM1094.00 312H1095.00V371H1094.00ZM1095.00 326H1096.00V371H1095.00ZM1096.00 334H1097.00V371H1096.00ZM1097.00 326H1098.00V371H1097.00ZM1098.00 330H1099.00V371H1098.00ZM1099.00 327H1100.00V371H1099.00ZM1100.00 337H1101.00V371H1100.00ZM1101.00 335H1102.00V371H1101.00ZM1102.00 336H1103.00V371H1102.00ZM1103.00 336H1104.00V371H1103.00ZM1104.00 327H1105.00V371H1104.00ZM1105.00 323H1106.00V371H1105.00ZM1106.00 334H1107.00V371H1106.00ZM1107.00 335H1108.00V371H1107.00ZM1108.00 335H1109.00V371H1108.00ZM1109.00 331H1110.00V371H1109.00ZM1110.00 328H1111.00V371H1110.00ZM1111.00 331H1112.00V371H1111.00ZM1112.00 326H1113.00V371H1112.00ZM1113.00 327H1114.00V371H1113.00ZM1114.00 333H1115.00V371H1114.00ZM1115.00 327H1116.00V371H1115.00ZM1116.00 327H1117.00V371H1116.00ZM1117.00 333H1118.00V371H1117.00ZM1118.00 335H1119.00V371H1118.00ZM1119.00 332H1120.00V371H1119.00ZM1120.00 327H1121.00V371H1120.00ZM1121.00 332H1122.00V371H1121.00ZM1122.00 334H1123.00V371H1122.00ZM1123.00 336H1124.00V371H1123.00ZM1124.00 329H1125.00V371H1124.00ZM1125.00 330H1126.00V371H1125.00ZM1126.00 311H1127.00V371H1126.00ZM1127.00 328H1128.00V371H1127.00ZM1128.00 336H1129.00V371H1128.00ZM1129.00 333H1130.00V371H1129.00ZM1130.00 316H1131.00V371H1130.00ZM1131.00 332H1132.00V371H1131.00ZM1132.00 331H1133.00V371H1132.00ZM1133.00 327H1134.00V371H1133.00ZM1134.00 327H1135.00V371H1134.00ZM1135.00 316H1136.00V371H1135.00ZM1136.00 328H1137.00V371H1136.00ZM1137.00 332H1138.00V371H1137.00ZM1138.00 332H1139.00V371H1138.00ZM1139.00 327H1140.00V371H1139.00ZM1140.00 342H1141.00V371H1140.00ZM1141.00 341H1142.00V371H1141.00ZM1142.00 341H1143.00V371H1142.00ZM1143.00 344H1144.00V371H1143.00ZM1144.00 345H1145.00V371H1144.00ZM1145.00 344H1146.00V371H1145.00ZM1146.00 343H1147.00V371H1146.00ZM1147.00 342H1148.00V371H1147.00ZM1148.00 341H1149.00V371H1148.00ZM1149.00 344H1150.00V371H1149.00ZM1150.00 327H1151.00V371H1150.00ZM1151.00 328H1152.00V371H1151.00ZM1152.00 332H1153.00V371H1152.00ZM1153.00 323H1154.00V371H1153.00ZM1154.00 320H1155.00V371H1154.00ZM1155.00 325H1156.00V371H1155.00ZM1156.00 320H1157.00V371H1156.00ZM1157.00 320H1158.00V371H1157.00ZM1158.00 332H1159.00V371H1158.00ZM1159.00 322H1160.00V371H1159.00ZM1160.00 326H1161.00V371H1160.00ZM1161.00 330H1162.00V371H1161.00ZM1162.00 324H1163.00V371H1162.00ZM1163.00 320H1164.00V371H1163.00ZM1164.00 330H1165.00V371H1164.00ZM1165.00 320H1166.00V371H1165.00ZM1166.00 329H1167.00V371H1166.00ZM1167.00 329H1168.00V371H1167.00ZM1168.00 312H1169.00V371H1168.00ZM1169.00 320H1170.00V371H1169.00ZM1170.00 329H1171.00V371H1170.00ZM1171.00 330H1172.00V371H1171.00ZM1172.00 323H1173.00V371H1172.00ZM1173.00 325H1174.00V371H1173.00ZM1174.00 326H1175.00V371H1174.00ZM1175.00 328H1176.00V371H1175.00ZM1176.00 322H1177.00V371H1176.00ZM1177.00 320H1178.00V371H1177.00ZM1178.00 323H1179.00V371H1178.00ZM1179.00 332H1180.00V371H1179.00ZM1180.00 324H1181.00V371H1180.00ZM1181.00 324H1182.00V371H1181.00ZM1182.00 331H1183.00V371H1182.00ZM1183.00 328H1184.00V371H1183.00ZM1184.00 332H1185.00V371H1184.00ZM1185.00 330H1186.00V371H1185.00ZM1186.00 331H1187.00V371H1186.00ZM1187.00 329H1188.00V371H1187.00ZM1188.00 324H1189.00V371H1188.00ZM1189.00 303H1190.00V371H1189.00ZM1190.00 334H1191.00V371H1190.00ZM1191.00 333H1192.00V371H1191.00ZM1192.00 333H1193.00V371H1192.00ZM1193.00 339H1194.00V371H1193.00ZM1194.00 335H1195.00V371H1194.00ZM1195.00 334H1196.00V371H1195.00ZM1196.00 333H1197.00V371H1196.00ZM1197.00 333H1198.00V371H1197.00ZM1198.00 337H1199.00V371H1198.00ZM1199.00 337H1200.00V371H1199.00ZM1200.00 337H1201.00V371H1200.00ZM1201.00 338H1202.00V371H1201.00ZM1202.00 333H1203.00V371H1202.00ZM1203.00 337H1204.00V371H1203.00ZM1204.00 335H1205.00V371H1204.00ZM1205.00 338H1206.00V371H1205.00ZM1206.00 338H1207.00V371H1206.00ZM1207.00 339H1208.00V371H1207.00ZM1208.00 333H1209.00V371H1208.00ZM1209.00 338H1210.00V371H1209.00ZM1210.00 335H1211.00V371H1210.00ZM1211.00 325H1212.00V371H1211.00ZM1212.00 302H1213.00V371H1212.00ZM1213.00 334H1214.00V371H1213.00ZM1214.00 334H1215.00V371H1214.00ZM1215.00 319H1216.00V371H1215.00ZM1216.00 333H1217.00V371H1216.00ZM1217.00 328H1218.00V371H1217.00ZM1218.00 324H1219.00V371H1218.00ZM1219.00 327H1220.00V371H1219.00ZM1220.00 328H1221.00V371H1220.00ZM1221.00 336H1222.00V371H1221.00ZM1222.00 334H1223.00V371H1222.00ZM1223.00 324H1224.00V371H1223.00ZM1224.00 329H1225.00V371H1224.00ZM1225.00 328H1226.00V371H1225.00ZM1226.00 330H1227.00V371H1226.00ZM1227.00 312H1228.00V371H1227.00ZM1228.00 316H1229.00V371H1228.00ZM1229.00 333H1230.00V371H1229.00ZM1230.00 324H1231.00V371H1230.00ZM1231.00 330H1232.00V371H1231.00ZM1232.00 326H1233.00V371H1232.00ZM1233.00 328H1234.00V371H1233.00ZM1234.00 327H1235.00V371H1234.00ZM1235.00 327H1236.00V371H1235.00ZM1236.00 333H1237.00V371H1236.00ZM1237.00 325H1238.00V371H1237.00ZM1238.00 325H1239.00V371H1238.00ZM1239.00 333H1240.00V371H1239.00ZM1240.00 332H1241.00V371H1240.00ZM1241.00 329H1242.00V371H1241.00ZM1242.00 311H1243.00V371H1242.00ZM1243.00 324H1244.00V371H1243.00ZM1244.00 327H1245.00V371H1244.00ZM1245.00 330H1246.00V371H1245.00ZM1246.00 335H1247.00V371H1246.00ZM1247.00 329H1248.00V371H1247.00ZM1248.00 333H1249.00V371H1248.00ZM1249.00 332H1250.00V371H1249.00ZM1250.00 328H1251.00V371H1250.00ZM1251.00 334H1252.00V371H1251.00ZM1252.00 333H1253.00V371H1252.00ZM1253.00 329H1254.00V371H1253.00ZM1254.00 331H1255.00V371H1254.00ZM1255.00 330H1256.00V371H1255.00ZM1256.00 327H1257.00V371H1256.00ZM1257.00 327H1258.00V371H1257.00ZM1258.00 334H1259.00V371H1258.00ZM1259.00 326H1260.00V371H1259.00ZM1260.00 328H1261.00V371H1260.00ZM1261.00 326H1262.00V371H1261.00ZM1262.00 326H1263.00V371H1262.00ZM1263.00 308H1264.00V371H1263.00ZM1264.00 325H1265.00V371H1264.00ZM1265.00 336H1266.00V371H1265.00ZM1266.00 333H1267.00V371H1266.00ZM1267.00 326H1268.00V371H1267.00ZM1268.00 325H1269.00V371H1268.00ZM1269.00 315H1270.00V371H1269.00ZM1270.00 334H1271.00V371H1270.00ZM1271.00 330H1272.00V371H1271.00ZM1272.00 330H1273.00V371H1272.00ZM1273.00 331H1274.00V371H1273.00ZM1274.00 333H1275.00V371H1274.00ZM1275.00 329H1276.00V371H1275.00ZM1276.00 333H1277.00V371H1276.00ZM1277.00 327H1278.00V371H1277.00ZM1278.00 335H1279.00V371H1278.00ZM1279.00 333H1280.00V371H1279.00ZM1280.00 332H1281.00V371H1280.00ZM1281.00 329H1282.00V371H1281.00ZM1282.00 317H1283.00V371H1282.00ZM1283.00 334H1284.00V371H1283.00ZM1284.00 332H1285.00V371H1284.00ZM1285.00 329H1286.00V371H1285.00ZM1286.00 332H1287.00V371H1286.00ZM1287.00 332H1288.00V371H1287.00ZM1288.00 326H1289.00V371H1288.00ZM1289.00 334H1290.00V371H1289.00ZM1290.00 330H1291.00V371H1290.00ZM1291.00 324H1292.00V371H1291.00ZM1292.00 326H1293.00V371H1292.00ZM1293.00 336H1294.00V371H1293.00ZM1294.00 325H1295.00V371H1294.00ZM1295.00 331H1296.00V371H1295.00ZM1296.00 330H1297.00V371H1296.00ZM1297.00 334H1298.00V371H1297.00ZM1298.00 329H1299.00V371H1298.00ZM1299.00 326H1300.00V371H1299.00ZM1300.00 329H1301.00V371H1300.00ZM1301.00 325H1302.00V371H1301.00ZM1302.00 317H1303.00V371H1302.00ZM1303.00 314H1304.00V371H1303.00ZM1304.00 329H1305.00V371H1304.00ZM1305.00 328H1306.00V371H1305.00ZM1306.00 326H1307.00V371H1306.00ZM1307.00 336H1308.00V371H1307.00ZM1308.00 326H1309.00V371H1308.00ZM1309.00 329H1310.00V371H1309.00ZM1310.00 325H1311.00V371H1310.00ZM1311.00 334H1312.00V371H1311.00ZM1312.00 330H1313.00V371H1312.00ZM1313.00 326H1314.00V371H1313.00ZM1314.00 328H1315.00V371H1314.00ZM1315.00 334H1316.00V371H1315.00ZM1316.00 330H1317.00V371H1316.00ZM1317.00 331H1318.00V371H1317.00ZM1318.00 334H1319.00V371H1318.00ZM1319.00 334H1320.00V371H1319.00ZM1320.00 328H1321.00V371H1320.00ZM1321.00 329H1322.00V371H1321.00ZM1322.00 323H1323.00V371H1322.00ZM1323.00 327H1324.00V371H1323.00ZM1324.00 327H1325.00V371H1324.00ZM1325.00 329H1326.00V371H1325.00ZM1326.00 332H1327.00V371H1326.00ZM1327.00 336H1328.00V371H1327.00ZM1328.00 324H1329.00V371H1328.00ZM1329.00 336H1330.00V371H1329.00ZM1330.00 325H1331.00V371H1330.00ZM1331.00 326H1332.00V371H1331.00ZM1332.00 337H1333.00V371H1332.00ZM1333.00 318H1334.00V371H1333.00ZM1334.00 326H1335.00V371H1334.00ZM1335.00 328H1336.00V371H1335.00ZM1336.00 336H1337.00V371H1336.00ZM1337.00 325H1338.00V371H1337.00ZM1338.00 332H1339.00V371H1338.00ZM1339.00 332H1340.00V371H1339.00ZM1340.00 334H1341.00V371H1340.00ZM1341.00 326H1342.00V371H1341.00ZM1342.00 330H1343.00V371H1342.00ZM1343.00 329H1344.00V371H1343.00ZM1344.00 331H1345.00V371H1344.00ZM1345.00 326H1346.00V371H1345.00ZM1346.00 315H1347.00V371H1346.00ZM1347.00 325H1348.00V371H1347.00ZM1348.00 330H1349.00V371H1348.00ZM1349.00 312H1350.00V371H1349.00ZM1350.00 330H1351.00V371H1350.00ZM1351.00 332H1352.00V371H1351.00ZM1352.00 328H1353.00V371H1352.00ZM1353.00 318H1354.00V371H1353.00ZM1354.00 314H1355.00V371H1354.00ZM1355.00 333H1356.00V371H1355.00ZM1356.00 328H1357.00V371H1356.00ZM1357.00 330H1358.00V371H1357.00ZM1358.00 315H1359.00V371H1358.00ZM1359.00 332H1360.00V371H1359.00ZM1360.00 335H1361.00V371H1360.00ZM1361.00 330H1362.00V371H1361.00ZM1362.00 334H1363.00V371H1362.00ZM1363.00 329H1364.00V371H1363.00ZM1364.00 331H1365.00V371H1364.00ZM1365.00 327H1366.00V371H1365.00ZM1366.00 329H1367.00V371H1366.00ZM1367.00 327H1368.00V371H1367.00ZM1368.00 337H1369.00V371H1368.00ZM1369.00 334H1370.00V371H1369.00ZM1370.00 327H1371.00V371H1370.00ZM1371.00 331H1372.00V371H1371.00ZM1372.00 314H1373.00V371H1372.00ZM1373.00 336H1374.00V371H1373.00ZM1374.00 324H1375.00V371H1374.00ZM1375.00 323H1376.00V371H1375.00ZM1376.00 336H1377.00V371H1376.00ZM1377.00 332H1378.00V371H1377.00ZM1378.00 336H1379.00V371H1378.00ZM1379.00 332H1380.00V371H1379.00ZM1380.00 333H1381.00V371H1380.00ZM1381.00 333H1382.00V371H1381.00ZM1382.00 332H1383.00V371H1382.00ZM1383.00 324H1384.00V371H1383.00ZM1384.00 323H1385.00V371H1384.00ZM1385.00 336H1386.00V371H1385.00ZM1386.00 328H1387.00V371H1386.00ZM1387.00 334H1388.00V371H1387.00ZM1388.00 327H1389.00V371H1388.00ZM1389.00 329H1390.00V371H1389.00ZM1390.00 329H1391.00V371H1390.00ZM1391.00 319H1392.00V371H1391.00ZM1392.00 301H1393.00V371H1392.00ZM1393.00 331H1394.00V371H1393.00ZM1394.00 315H1395.00V371H1394.00ZM1395.00 331H1396.00V371H1395.00ZM1396.00 337H1397.00V371H1396.00ZM1397.00 310H1398.00V371H1397.00ZM1398.00 326H1399.00V371H1398.00ZM1399.00 303H1400.00V371H1399.00ZM1400.00 325H1401.00V371H1400.00ZM1401.00 324H1402.00V371H1401.00ZM1402.00 304H1403.00V371H1402.00ZM1403.00 326H1404.00V371H1403.00ZM1404.00 304H1405.00V371H1404.00ZM1405.00 333H1406.00V371H1405.00ZM1406.00 315H1407.00V371H1406.00ZM1407.00 333H1408.00V371H1407.00ZM1408.00 336H1409.00V371H1408.00ZM1409.00 337H1410.00V371H1409.00ZM1410.00 304H1411.00V371H1410.00ZM1411.00 322H1412.00V371H1411.00ZM1412.00 333H1413.00V371H1412.00ZM1413.00 335H1414.00V371H1413.00ZM1414.00 324H1415.00V371H1414.00ZM1415.00 331H1416.00V371H1415.00ZM1416.00 333H1417.00V371H1416.00ZM1417.00 334H1418.00V371H1417.00ZM1418.00 332H1419.00V371H1418.00ZM1419.00 329H1420.00V371H1419.00ZM1420.00 335H1421.00V371H1420.00ZM1421.00 335H1422.00V371H1421.00ZM1422.00 304H1423.00V371H1422.00ZM1423.00 334H1424.00V371H1423.00ZM1424.00 330H1425.00V371H1424.00ZM1425.00 337H1426.00V371H1425.00ZM1426.00 333H1427.00V371H1426.00ZM1427.00 331H1428.00V371H1427.00ZM1428.00 331H1429.00V371H1428.00ZM1429.00 333H1430.00V371H1429.00ZM1430.00 335H1431.00V371H1430.00ZM1431.00 326H1432.00V371H1431.00ZM1432.00 331H1433.00V371H1432.00ZM1433.00 336H1434.00V371H1433.00ZM1434.00 327H1435.00V371H1434.00ZM1435.00 335H1436.00V371H1435.00ZM1436.00 333H1437.00V371H1436.00ZM1437.00 336H1438.00V371H1437.00ZM1438.00 334H1439.00V371H1438.00ZM1439.00 313H1440.00V371H1439.00ZM1440.00 335H1441.00V371H1440.00ZM1441.00 335H1442.00V371H1441.00ZM1442.00 329H1443.00V371H1442.00ZM1443.00 334H1444.00V371H1443.00ZM1444.00 329H1445.00V371H1444.00ZM1445.00 335H1446.00V371H1445.00ZM1446.00 309H1447.00V371H1446.00ZM1447.00 335H1448.00V371H1447.00ZM1448.00 333H1449.00V371H1448.00ZM1449.00 336H1450.00V371H1449.00ZM1450.00 332H1451.00V371H1450.00ZM1451.00 329H1452.00V371H1451.00ZM1452.00 328H1453.00V371H1452.00ZM1453.00 330H1454.00V371H1453.00ZM1454.00 331H1455.00V371H1454.00ZM1455.00 302H1456.00V371H1455.00ZM1456.00 312H1457.00V371H1456.00ZM1457.00 335H1458.00V371H1457.00ZM1458.00 323H1459.00V371H1458.00ZM1459.00 314H1460.00V371H1459.00ZM1460.00 324H1461.00V371H1460.00ZM1461.00 318H1462.00V371H1461.00ZM1462.00 315H1463.00V371H1462.00ZM1463.00 316H1464.00V371H1463.00ZM1464.00 318H1465.00V371H1464.00ZM1465.00 318H1466.00V371H1465.00ZM1466.00 308H1467.00V371H1466.00ZM1467.00 302H1468.00V371H1467.00ZM1468.00 311H1469.00V371H1468.00ZM1469.00 309H1470.00V371H1469.00ZM1470.00 294H1471.00V371H1470.00ZM1471.00 281H1472.00V371H1471.00ZM1472.00 303H1473.00V371H1472.00ZM1473.00 308H1474.00V371H1473.00ZM1474.00 310H1475.00V371H1474.00ZM1475.00 308H1476.00V371H1475.00ZM1476.00 315H1477.00V371H1476.00ZM1477.00 296H1478.00V371H1477.00ZM1478.00 310H1479.00V371H1478.00ZM1479.00 317H1480.00V371H1479.00ZM1480.00 308H1481.00V371H1480.00ZM1481.00 316H1482.00V371H1481.00ZM1482.00 311H1483.00V371H1482.00ZM1483.00 319H1484.00V371H1483.00ZM1484.00 319H1485.00V371H1484.00ZM1485.00 319H1486.00V371H1485.00ZM1486.00 314H1487.00V371H1486.00ZM1487.00 317H1488.00V371H1487.00ZM1488.00 320H1489.00V371H1488.00ZM1489.00 318H1490.00V371H1489.00ZM1490.00 311H1491.00V371H1490.00ZM1491.00 303H1492.00V371H1491.00ZM1492.00 327H1493.00V371H1492.00ZM1493.00 334H1494.00V371H1493.00ZM1494.00 327H1495.00V371H1494.00ZM1495.00 326H1496.00V371H1495.00ZM1496.00 333H1497.00V371H1496.00ZM1497.00 330H1498.00V371H1497.00ZM1498.00 333H1499.00V371H1498.00ZM1499.00 331H1500.00V371H1499.00ZM1500.00 307H1501.00V371H1500.00ZM1501.00 331H1502.00V371H1501.00ZM1502.00 334H1503.00V371H1502.00ZM1503.00 329H1504.00V371H1503.00ZM1504.00 328H1505.00V371H1504.00ZM1505.00 328H1506.00V371H1505.00ZM1506.00 330H1507.00V371H1506.00ZM1507.00 308H1508.00V371H1507.00ZM1508.00 326H1509.00V371H1508.00ZM1509.00 332H1510.00V371H1509.00ZM1510.00 330H1511.00V371H1510.00ZM1511.00 328H1512.00V371H1511.00ZM1512.00 329H1513.00V371H1512.00ZM1513.00 335H1514.00V371H1513.00ZM1514.00 326H1515.00V371H1514.00ZM1515.00 313H1516.00V371H1515.00ZM1516.00 328H1517.00V371H1516.00ZM1517.00 325H1518.00V371H1517.00ZM1518.00 328H1519.00V371H1518.00ZM1519.00 325H1520.00V371H1519.00ZM1520.00 330H1521.00V371H1520.00ZM1521.00 329H1522.00V371H1521.00ZM1522.00 327H1523.00V371H1522.00ZM1523.00 327H1524.00V371H1523.00ZM1524.00 282H1525.00V371H1524.00ZM1525.00 282H1526.00V371H1525.00ZM1526.00 280H1527.00V371H1526.00ZM1527.00 280H1528.00V371H1527.00ZM1528.00 280H1529.00V371H1528.00ZM1529.00 281H1530.00V371H1529.00ZM1530.00 281H1531.00V371H1530.00Z" fill="#ff9490" shape-rendering="crispEdges"/>
<path d="M436 252H438V371H436ZM440 347H441V371H440ZM446 358H447V371H446ZM464 362H465V371H464ZM476 365H477V371H476ZM485 118H491V371H485ZM496 247H498V371H496ZM512 264H513V371H512ZM522 266H523V371H522ZM531 252H532V371H531ZM542 188H544V371H542ZM545 296H546V371H545ZM547 336H548V371H547ZM551 296H552V371H551ZM556 302H557V371H556ZM563 314H564V371H563ZM579 310H580V371H579ZM602 306H603V371H602ZM651 118H653V371H651ZM653 200H655V371H653ZM664 267H665V371H664ZM668 270H669V371H668ZM700 300H701V371H700ZM705 310H706V371H705ZM710 298H711V371H710ZM739 264H740V371H739ZM777 164H779V371H777ZM802 264H803V371H802ZM804 264H805V371H804ZM830 300H831V371H830ZM842 302H843V371H842ZM850 304H851V371H850ZM856 279H857V371H856ZM874 304H875V371H874ZM881 307H882V371H881ZM892 317H893V371H892ZM900 182H902V371H900ZM912 118H914V371H912ZM921 160H923V371H921ZM917 292H918V371H917ZM933 297H934V371H933ZM937 292H938V371H937ZM932 297H933V371H932ZM938 290H939V371H938ZM959 118H961V371H959ZM969 128H971V371H969ZM978 270H979V371H978ZM996 130H998V371H996ZM1008 290H1009V371H1008ZM1011 264H1012V371H1011ZM1033 118H1035V371H1033ZM1041 258H1043V371H1041ZM1052 287H1053V371H1052ZM1055 302H1056V371H1055ZM1072 155H1074V371H1072ZM1080 160H1082V371H1080ZM1083 118H1086V371H1083ZM1089 118H1091V371H1089ZM1096 118H1098V371H1096ZM1118 282H1119V371H1118ZM1123 282H1124V371H1123ZM1146 148H1148V371H1146ZM1151 144H1153V371H1151ZM1153 142H1155V371H1153ZM1155 118H1159V371H1155ZM1166 280H1167V371H1166ZM1179 277H1180V371H1179ZM1204 118H1206V371H1204ZM1210 118H1212V371H1210ZM1218 128H1220V371H1218ZM1226 118H1228V371H1226ZM1232 300H1233V371H1232ZM1263 282H1264V371H1263ZM1290 118H1292V371H1290ZM1298 118H1300V371H1298ZM1303 118H1305V371H1303ZM1306 118H1308V371H1306ZM1313 306H1314V371H1313ZM1323 300H1324V371H1323ZM1334 118H1336V371H1334ZM1341 297H1342V371H1341ZM1353 220H1355V371H1353ZM1370 306H1371V371H1370ZM1382 118H1384V371H1382ZM1401 118H1403V371H1401ZM1402 284H1404V371H1402ZM1408 118H1410V371H1408ZM1412 269H1413V371H1412ZM1416 261H1418V371H1416ZM1427 118H1429V371H1427ZM1431 118H1433V371H1431ZM1437 118H1439V371H1437ZM1443 118H1445V371H1443ZM1448 297H1449V371H1448ZM1468 302H1469V371H1468ZM1474 306H1475V371H1474ZM1482 307H1483V371H1482ZM1494 118H1496V371H1494ZM1499 118H1501V371H1499ZM1507 118H1509V371H1507ZM1511 118H1513V371H1511ZM1515 118H1517V371H1515Z" fill="#ff9490" shape-rendering="crispEdges"/>
<rect x="434.00" y="118.00" width="1.60" height="254.00" fill="#8ff5dc"/>
<rect x="498.00" y="118.00" width="2.60" height="254.00" fill="#8ff5dc"/>
<rect x="604.80" y="118.00" width="25.20" height="254.00" fill="#8ff5dc"/>
<rect x="647.00" y="118.00" width="4.00" height="254.00" fill="#8ff5dc"/>
<rect x="679.00" y="241.30" width="1.60" height="130.70" fill="#8ff5dc"/>
<rect x="749.00" y="318.00" width="1.50" height="54.00" fill="#8ff5dc"/>
<rect x="434.00" y="371.00" width="1084.60" height="2.00" fill="#7fd8c4"/>
<rect x="1488.50" y="160.00" width="42.50" height="17.00" fill="#3b3b3b" fill-opacity="0.92"/>
<text x="1509.8" y="173.3" font-size="13.5" fill="#e49a96" text-anchor="middle">80 ms</text>
<rect x="1488.50" y="211.10" width="42.50" height="17.00" fill="#3b3b3b" fill-opacity="0.92"/>
<text x="1509.8" y="224.4" font-size="13.5" fill="#e49a96" text-anchor="middle">60 ms</text>
<rect x="1488.50" y="261.50" width="42.50" height="17.00" fill="#3b3b3b" fill-opacity="0.92"/>
<text x="1509.8" y="274.8" font-size="13.5" fill="#e49a96" text-anchor="middle">40 ms</text>
<rect x="1488.50" y="312.10" width="42.50" height="17.00" fill="#3b3b3b" fill-opacity="0.92"/>
<text x="1509.8" y="325.4" font-size="13.5" fill="#e49a96" text-anchor="middle">20 ms</text>
<rect x="1518.60" y="355.50" width="12.40" height="17.50" fill="#3b3b3b"/>
<text x="1524.8" y="368.0" font-size="13.5" fill="#e49a96" text-anchor="middle">0</text>
<rect x="41.00" y="371.00" width="376.60" height="3.00" fill="#383838"/>
<rect x="417.60" y="371.00" width="16.40" height="3.00" fill="#383838"/>
<rect x="1518.00" y="373.00" width="13.50" height="1.50" fill="#383838"/>
<rect x="434.00" y="373.00" width="1097.00" height="1.20" fill="#383838"/>
<rect x="417.60" y="374.00" width="1113.40" height="20.50" fill="#4a4a4a"/>
<rect x="41.00" y="374.00" width="376.60" height="20.50" fill="#574b4b"/>
<rect x="41.00" y="394.50" width="1490.00" height="1.50" fill="#383838"/>
<rect x="417.60" y="396.00" width="1113.40" height="9.00" fill="#5a4f57"/>
<rect x="41.00" y="396.00" width="376.60" height="9.00" fill="#574b4b"/>
<rect x="417.00" y="375.00" width="18.00" height="5.00" fill="#e8b4b0"/>
<rect x="420.00" y="375.00" width="2.00" height="5.00" fill="#c870d8"/>
<rect x="417.00" y="381.00" width="18.00" height="5.00" fill="#000000"/>
<rect x="421.00" y="381.00" width="1.50" height="5.00" fill="#f0e0e0"/>
<rect x="426.50" y="388.00" width="1.50" height="4.00" fill="#ff40b0"/>
<rect x="440.50" y="375.00" width="1.60" height="6.00" fill="#b04090"/>
<rect x="499.00" y="375.00" width="1.60" height="6.00" fill="#80ff40"/>
<rect x="514.50" y="375.00" width="1.60" height="6.00" fill="#ff40b0"/>
<rect x="588.00" y="375.00" width="1.60" height="6.00" fill="#c040a0"/>
<rect x="607.00" y="375.00" width="1.60" height="6.00" fill="#ff40c0"/>
<rect x="614.00" y="375.00" width="1.60" height="6.00" fill="#c0ff40"/>
<rect x="615.50" y="375.00" width="1.60" height="6.00" fill="#f0e040"/>
<rect x="619.50" y="375.00" width="1.60" height="6.00" fill="#ff70c0"/>
<rect x="621.00" y="375.00" width="1.60" height="6.00" fill="#60f0b0"/>
<rect x="648.60" y="375.00" width="1.60" height="6.00" fill="#f0b040"/>
<rect x="727.30" y="375.00" width="1.60" height="6.00" fill="#ff40c0"/>
<rect x="784.30" y="375.00" width="1.60" height="6.00" fill="#f0d0d0"/>
<rect x="801.00" y="375.00" width="1.60" height="6.00" fill="#ff40c0"/>
<rect x="823.30" y="375.00" width="1.60" height="6.00" fill="#60d0c0"/>
<rect x="874.80" y="375.00" width="1.60" height="6.00" fill="#ff40c0"/>
<rect x="912.00" y="375.00" width="1.60" height="6.00" fill="#f0c0e0"/>
<rect x="926.00" y="375.00" width="1.60" height="6.00" fill="#f0f0f0"/>
<rect x="938.00" y="375.00" width="1.60" height="6.00" fill="#f8f8f8"/>
<rect x="948.60" y="375.00" width="1.60" height="6.00" fill="#ff40c0"/>
<rect x="1023.00" y="375.00" width="1.60" height="6.00" fill="#ff40c0"/>
<rect x="1089.00" y="375.00" width="1.60" height="6.00" fill="#ff70c0"/>
<rect x="1097.00" y="375.00" width="1.60" height="6.00" fill="#c040c0"/>
<rect x="1101.80" y="375.00" width="1.60" height="6.00" fill="#e0e0e0"/>
<rect x="1116.90" y="375.00" width="1.60" height="6.00" fill="#a0f0f0"/>
<rect x="1155.80" y="375.00" width="1.60" height="6.00" fill="#f0c0e0"/>
<rect x="1171.00" y="375.00" width="1.60" height="6.00" fill="#ff40c0"/>
<rect x="1211.50" y="375.00" width="1.60" height="6.00" fill="#60e0d0"/>
<rect x="1224.70" y="375.00" width="1.60" height="6.00" fill="#a070f0"/>
<rect x="1227.70" y="375.00" width="1.60" height="6.00" fill="#60a0f0"/>
<rect x="1244.40" y="375.00" width="1.60" height="6.00" fill="#ff40c0"/>
<rect x="1313.60" y="375.00" width="1.60" height="6.00" fill="#a070f0"/>
<rect x="1316.00" y="375.00" width="1.60" height="6.00" fill="#70b0f0"/>
<rect x="1333.20" y="375.00" width="1.60" height="6.00" fill="#f0c0a0"/>
<rect x="1390.00" y="375.00" width="1.60" height="6.00" fill="#f070c0"/>
<rect x="1393.00" y="375.00" width="1.60" height="6.00" fill="#d070f0"/>
<rect x="1395.70" y="375.00" width="1.60" height="6.00" fill="#a070f0"/>
<rect x="1452.40" y="375.00" width="1.60" height="6.00" fill="#a070f0"/>
<rect x="1455.00" y="375.00" width="1.60" height="6.00" fill="#60a0f0"/>
<rect x="1465.70" y="375.00" width="1.60" height="6.00" fill="#ff70c0"/>
<rect x="620.00" y="382.00" width="1.50" height="4.00" fill="#ff40c0"/>
<rect x="41.00" y="119.00" width="88.00" height="14.00" fill="#3c3c3c"/>
<text x="43.5" y="130.8" font-size="12" fill="#e8e800">◊</text>
<text x="54.2" y="131.0" font-size="13.5" fill="#e8e800" textLength="72.0" lengthAdjust="spacingAndGlyphs">Main Graph</text>
<rect x="41.00" y="374.00" width="100.70" height="15.00" fill="#3c3c3c"/>
<text x="43.5" y="386.0" font-size="13.8" fill="#e0e0e0" textLength="96.0" lengthAdjust="spacingAndGlyphs">Timing Regions</text>
<rect x="41.00" y="396.00" width="84.80" height="9.00" fill="#3c3c3c"/>
<text x="43.5" y="406.0" font-size="13.8" fill="#e0e0e0" textLength="80.0" lengthAdjust="spacingAndGlyphs">GameThread</text>
<rect x="625.00" y="385.00" width="288.00" height="20.00" fill="#555555" fill-opacity="0.35"/>
<text x="632.8" y="401.0" font-size="14" fill="#5f8a80" textLength="275.0" lengthAdjust="spacingAndGlyphs">PSOPrecache: Precaching (Rendering Frame)</text>
<rect x="653.30" y="82.00" width="1.50" height="323.00" fill="#a88a34"/>
<rect x="605.00" y="373.00" width="1.00" height="32.00" fill="#8a8a8a"/>
<circle cx="605.8" cy="371" r="5.6" fill="#f0f020" fill-opacity="0.35"/>
<circle cx="605.8" cy="371" r="4.2" fill="#8fe8d0" stroke="#f0f020" stroke-width="2.2"/>
<rect x="609.50" y="68.00" width="1.00" height="13.00" fill="#f0f0f0"/>
<rect x="579.00" y="81.00" width="60.00" height="15.50" fill="#f0f0f0"/>
<text x="609.0" y="94.0" font-size="13.5" fill="#404040" text-anchor="middle" textLength="55.0" lengthAdjust="spacingAndGlyphs">1m 26.7s</text>
<rect x="646.00" y="68.00" width="14.30" height="14.70" fill="#f0b620"/>
<text x="653.2" y="80.6" font-size="13.5" fill="#5a4a22" text-anchor="middle">T</text>
<rect x="1531.50" y="119.00" width="2.50" height="286.00" fill="#1a1a1a"/>
<rect x="1533.00" y="28.00" width="1.00" height="91.00" fill="#1a1a1a"/>
</svg>
<polygon points="41,28 50,28 41,37" fill="#0a6fdc"/>
<g>
<rect x="56.80" y="35.80" width="18.30" height="3.80" fill="#c4c4c4"/>
<rect x="54.10" y="42.30" width="11.40" height="3.40" fill="#7a7a7a"/>
<rect x="54.90" y="48.80" width="8.70" height="3.80" fill="#7a7a7a"/>
<circle cx="73.2" cy="49.9" r="4.9" fill="none" stroke="#c4c4c4" stroke-width="1.8"/>
<line x1="69.5" y1="53.6" x2="65" y2="58.2" stroke="#c4c4c4" stroke-width="2"/>
<text x="83.2" y="52.3" font-size="17" fill="#c4c4c4" textLength="73.8" lengthAdjust="spacingAndGlyphs">All Tracks</text>
<polyline points="166.8,44.8 171.9,49.9 177.0,44.8" fill="none" stroke="#c4c4c4" stroke-width="1.9"/>
<rect x="197.50" y="36.00" width="26.40" height="3.40" fill="#c4c4c4"/>
<rect x="198.40" y="43.00" width="12.30" height="2.80" fill="#c4c4c4"/>
<rect x="214.20" y="43.00" width="7.80" height="2.80" fill="#c4c4c4"/>
<rect x="201.00" y="49.00" width="8.00" height="3.00" fill="#7a7a7a"/>
<rect x="216.00" y="49.00" width="4.40" height="3.00" fill="#7a7a7a"/>
<rect x="202.80" y="55.30" width="5.20" height="2.90" fill="#7a7a7a"/>
<text x="226.5" y="52.3" font-size="17" fill="#c4c4c4" textLength="74.5" lengthAdjust="spacingAndGlyphs">CPU/GPU</text>
<polyline points="312.0,44.8 316.5,49.9 321.0,44.8" fill="none" stroke="#c4c4c4" stroke-width="1.9"/>
<rect x="345.20" y="36.20" width="18.80" height="3.50" fill="#c4c4c4"/>
<rect x="342.90" y="42.00" width="14.10" height="3.60" fill="#7a7a7a"/>
<rect x="343.00" y="48.00" width="7.00" height="3.40" fill="#7a7a7a"/>
<polygon points="360.3,44.6 362.4,49.3 367.5,49.9 363.7,53.3 364.8,58.3 360.3,55.8 355.8,58.3 356.9,53.3 353.1,49.9 358.2,49.3" fill="#c4c4c4"/>
<text x="371.0" y="52.3" font-size="17" fill="#c4c4c4" textLength="41.0" lengthAdjust="spacingAndGlyphs">Other</text>
<polyline points="422.4,44.8 427.9,49.9 433.3,44.8" fill="none" stroke="#c4c4c4" stroke-width="1.9"/>
<rect x="455.40" y="36.20" width="20.00" height="3.50" fill="#c4c4c4"/>
<rect x="454.00" y="42.00" width="13.00" height="3.60" fill="#7a7a7a"/>
<rect x="454.00" y="48.00" width="9.60" height="3.40" fill="#7a7a7a"/>
<rect x="470.30" y="41.00" width="3.20" height="11.00" fill="#c4c4c4"/>
<polygon points="464.9,50.5 478.9,50.5 471.9,58.8" fill="#c4c4c4"/>
<text x="482.4" y="52.3" font-size="17" fill="#c4c4c4" textLength="56.3" lengthAdjust="spacingAndGlyphs">Plugins</text>
<polyline points="546.7,44.8 552.2,49.9 557.6,44.8" fill="none" stroke="#c4c4c4" stroke-width="1.9"/>
<path d="M578.5 47.5 Q590.7 37.5 603 47.5 Q590.7 57.5 578.5 47.5Z" fill="#c4c4c4"/>
<circle cx="590.7" cy="47.5" r="4.6" fill="#232323"/>
<circle cx="590.7" cy="47.5" r="2.6" fill="#c4c4c4"/>
<text x="606.7" y="52.3" font-size="17" fill="#c4c4c4" textLength="83.3" lengthAdjust="spacingAndGlyphs">View Mode</text>
<polyline points="699.0,44.8 704.5,49.9 710.0,44.8" fill="none" stroke="#c4c4c4" stroke-width="1.9"/>
<rect x="1484.00" y="45.30" width="9.00" height="2.90" fill="#c4c4c4"/>
<polygon points="1492.2,40.4 1500.4,46.7 1492.2,53" fill="#c4c4c4"/>
<path d="M1502 36H1505Q1507 36 1507 38.5V56.5Q1507 59 1505 59H1502Z" fill="#777777"/>
<circle cx="1530" cy="40.4" r="2.1" fill="#c4c4c4"/>
<circle cx="1530" cy="47.2" r="2.1" fill="#c4c4c4"/>
<circle cx="1530" cy="54.5" r="2.1" fill="#c4c4c4"/>
</g>
</svg>
</body></html>
